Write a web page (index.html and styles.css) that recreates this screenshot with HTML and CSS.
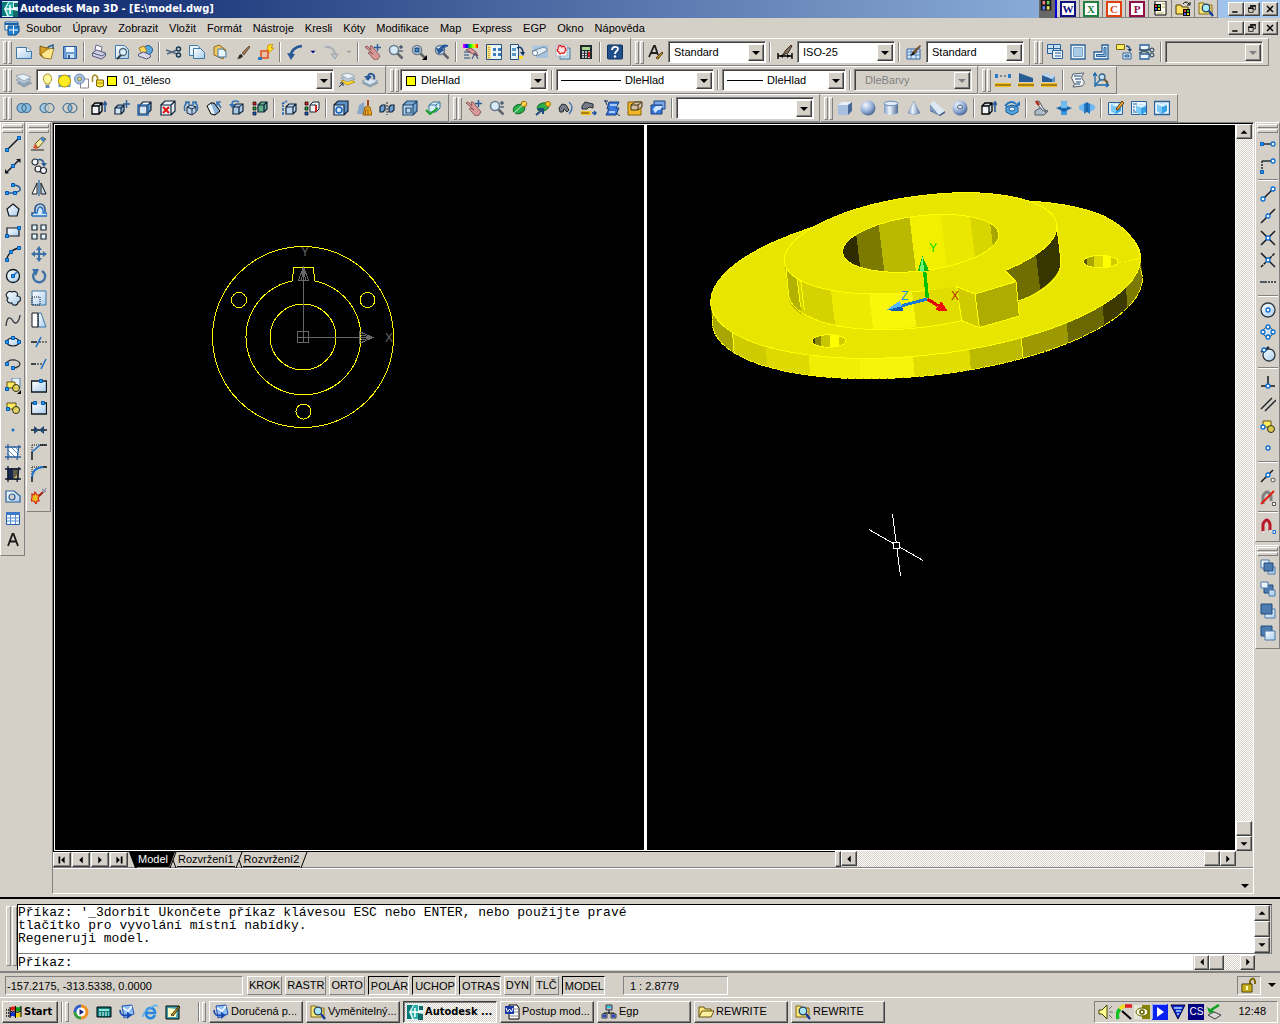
FILE: index.html
```html
<!DOCTYPE html>
<html lang="cs">
<head>
<meta charset="utf-8">
<title>Autodesk Map 3D - [E:\model.dwg]</title>
<link rel="stylesheet" href="styles.css">
</head>
<body>
<svg class="sprite" aria-hidden="true">
<defs>
<linearGradient id="gp" x1="0" y1="0" x2="1" y2="1"><stop offset="0" stop-color="#fff"/><stop offset="1" stop-color="#a9cdec"/></linearGradient>
<linearGradient id="gm" x1="0" y1="0" x2="1" y2="0"><stop offset="0" stop-color="#7c9cc4"/><stop offset=".4" stop-color="#eef5fd"/><stop offset="1" stop-color="#4c6c98"/></linearGradient>
<radialGradient id="gs" cx=".35" cy=".3" r=".8"><stop offset="0" stop-color="#f4f8ff"/><stop offset=".5" stop-color="#9cb4dc"/><stop offset="1" stop-color="#3a5688"/></radialGradient>
<linearGradient id="gr" x1="0" y1="0" x2="1" y2="0"><stop offset="0" stop-color="#f0f"/><stop offset=".25" stop-color="#00f"/><stop offset=".5" stop-color="#0f0"/><stop offset=".75" stop-color="#ff0"/><stop offset="1" stop-color="#f00"/></linearGradient>
<g id="cube"><path d="M2 6h8v8H2z" fill="#d4e6f4"/><path d="M2 6l4-4h8l-4 4z" fill="#fff"/><path d="M10 6l4-4v8l-4 4z" fill="#6b9cc8"/><path d="M2 6h8v8H2zM2 6l4-4h8v8l-4 4M10 6l4-4" fill="none" stroke="#10243c" stroke-width="1.2"/></g>
<g id="minicube"><path d="M1 8h6v6H1z" fill="#d4e6f4"/><path d="M1 8l3-3h6v6l-3 3V8z" fill="#8ab2d6"/><path d="M1 8h6v6H1zM1 8l3-3h6v6l-3 3M7 8l3-3" fill="none" stroke="#10243c" stroke-width="1.2"/></g>
<g id="icecube"><path d="M3 5l5-2 5 2v6l-5 3-5-3z" fill="#38a0e8"/><path d="M3 5l5-2 5 2-5 2z" fill="#d8f2ff"/><path d="M3 5l5 2v7l-5-3z" fill="#7cc8f4"/></g>
<g id="lens"><circle cx="6" cy="6" r="4.5" fill="#d8ecf8" stroke="#6c7c90" stroke-width="1.6"/><path d="M9.5 9.5l5 5" stroke="#606468" stroke-width="2.5"/></g>
<g id="nut"><path d="M-1.5-1.5h3v3h-3z" fill="#2a9cf0" stroke="#0058b0"/></g>
<g id="ring"><circle r="2" fill="#fff" stroke="#0a6cd0" stroke-width="1.3"/></g>
<g id="ruler"><path d="M0 11h16v4H0z" fill="#f0c020"/><path d="M1 12v2M3 12v2M5 12v2M7 12v2M9 12v2M11 12v2M13 12v2M15 12v2" stroke="#604000"/></g>
</defs>
<symbol id="i-app" viewBox="0 0 16 16"><path d="M0 0h16v16H0z" fill="#d8f4f0"/><path d="M0 1h6L2 8l3 7H0z" fill="#087878"/><path d="M7 1h4v14H7L4 8z" fill="#28b0a8"/><path d="M12 2h4v4h-4zM11 9l5 1v6h-5z" fill="#106868"/><path d="M8 4v9M3 8h11" stroke="#fff" stroke-width="1.5"/></symbol>
<symbol id="i-doc" viewBox="0 0 16 16"><path d="M1 2h13v8H1z" fill="#fff" stroke="#1860a8"/><path d="M1 4h13" stroke="#1860a8" stroke-width="2"/><path d="M4 6h11v6l-3 3H4z" fill="#2080d0" stroke="#0c4888"/><path d="M9.500 6v8M5 10h9" stroke="#fff"/></symbol>
<symbol id="i-new" viewBox="0 0 16 16"><path d="M.5 3.500h10l5 4v7H.5z" fill="url(#gp)" stroke="#3c78a8"/><path d="M10.500 3.500v4h5" fill="#fff" stroke="#3c78a8"/></symbol>
<symbol id="i-open" viewBox="0 0 16 16"><path d="M1 2l6 2 3-1-5 11-4-3z" fill="#d8a028" stroke="#805c10"/><path d="M5 14l-3-4 7-5 6-1-3 11z" fill="#ffe890" stroke="#a07c20"/><path d="M9 3l5-2v4" fill="none" stroke="#286090" stroke-width="1.5"/></symbol>
<symbol id="i-save" viewBox="0 0 16 16"><path d="M1.500 2.500h13v12h-13z" fill="#6c9cd8" stroke="#2a5c9c"/><path d="M4 3h8v5H4z" fill="#eef6ff"/><path d="M5 10h7v4H5z" fill="#cfe0f0"/><path d="M6 11h2v3H6z" fill="#2a5c9c"/></symbol>
<symbol id="i-print" viewBox="0 0 16 16"><path d="M5 1l6 2-1 5-6-2z" fill="#fff" stroke="#666c90"/><path d="M1.500 9l4-3 9 3v3l-4 3-9-3z" fill="#d0d0e0" stroke="#505880"/><path d="M2 9l9 3 4-3" fill="none" stroke="#505880"/></symbol>
<symbol id="i-preview" viewBox="0 0 16 16"><path d="M1.500 1.500h9l4 4v9h-13z" fill="url(#gp)" stroke="#3c78a8"/><circle cx="9" cy="8" r="3.5" fill="#d8f0fc" stroke="#506878" stroke-width="1.3"/><path d="M7 11l-4 4" stroke="#303840" stroke-width="2"/></symbol>
<symbol id="i-publish" viewBox="0 0 16 16"><circle cx="11" cy="6" r="4.5" fill="#58a8e0" stroke="#205890"/><path d="M2 4l5-2 3 5-5 3z" fill="#ffd860" stroke="#a07820"/><path d="M1.500 10l5-2 7 3v2l-4 2-8-3z" fill="#d8d8e8" stroke="#505880"/></symbol>
<symbol id="i-cut" viewBox="0 0 16 16"><path d="M0 6l11 4M1 10l10-4" stroke="#506880" stroke-width="1.6"/><circle cx="12.5" cy="5" r="2" fill="none" stroke="#183858" stroke-width="1.5"/><circle cx="12.5" cy="11" r="2" fill="none" stroke="#183858" stroke-width="1.5"/></symbol>
<symbol id="i-copy" viewBox="0 0 16 16"><path d="M.5 1.500h8l3 3v7H.5z" fill="#e8f2fa" stroke="#3c78a8"/><path d="M4.500 4.500h7l4 4v6h-11z" fill="url(#gp)" stroke="#3c78a8"/></symbol>
<symbol id="i-paste" viewBox="0 0 16 16"><path d="M2 3l5-2 7 5-3 9-9-4z" fill="#f0c860" stroke="#906818"/><path d="M6 5h5l3 3v5H6z" fill="#e8f4fc" stroke="#3c78a8"/></symbol>
<symbol id="i-brush" viewBox="0 0 16 16"><path d="M7 9l7-7 1 1-6 8z" fill="#a07850" stroke="#503820" stroke-width=".7"/><path d="M2 15c2-1 1-4 4-5l2 2c-1 2-3 3-6 3z" fill="#282828"/></symbol>
<symbol id="i-blockedit" viewBox="0 0 16 16"><path d="M10 1l5-1-2 4h3l-7 7 2-5H9z" fill="#ffe020" stroke="#c08000" stroke-width=".7"/><path d="M3 7h7v7H3z" fill="#e8c0a8" stroke="#e05018" stroke-width="1.5"/><path d="M0 13h4v3H0z" fill="#2a78c8"/></symbol>
<symbol id="i-undo" viewBox="0 0 16 16"><path d="M4 12C4 6 8 3 15 2" fill="none" stroke="#285898" stroke-width="2.6"/><path d="M0 9l8 1-4 6z" fill="#285898"/></symbol>
<symbol id="i-redo" viewBox="0 0 16 16"><path d="M2 3c6-1 10 3 10 8" fill="none" stroke="#a8b0b8" stroke-width="2"/><path d="M8 10h7l-3 5z" fill="#c4c8cc" stroke="#98a0a8"/></symbol>
<symbol id="i-pan" viewBox="0 0 16 16"><path d="M0 3l2-1 4 4-1-4 2 0 3 4 1 1 4 5-3 4c-5 0-5-4-9-7l2-1 3 2z" fill="#d89898" stroke="#804848" stroke-width=".8"/><path d="M12.500 0v7M9 3.500h7" stroke="#2a5c9c" stroke-width="1.5"/></symbol>
<symbol id="i-zoom" viewBox="0 0 16 16"><use href="#lens"/><path d="M11 3h4M13 1v4M11 7h4" stroke="#183858"/></symbol>
<symbol id="i-zoomwin" viewBox="0 0 16 16"><use href="#lens"/><path d="M4 4h4v4H4z" fill="#4888c8" stroke="#103868"/><path d="M16 11v5h-5z"/></symbol>
<symbol id="i-zoomprev" viewBox="0 0 16 16"><use href="#lens"/><path d="M14 2C9 0 6 3 5 7M3 5l2 4 4-3z" fill="#285898" stroke="#285898" stroke-width="1.5"/></symbol>
<symbol id="i-props" viewBox="0 0 16 16"><path d="M0 0h15v4H0z" fill="url(#gr)"/><path d="M3 6l5-2 5 4 2 4-3-1-4-2z" fill="#d89898" stroke="#905050"/><path d="M1 8h6M1 11h5M1 14h6" stroke="#204878"/><path d="M9 15l3-6 3 6" fill="none" stroke="#204878"/></symbol>
<symbol id="i-dc" viewBox="0 0 16 16"><path d="M.5 .5h15v15H.5z" fill="#eaf4fc" stroke="#28507c"/><path d="M1 1h4v14H1z" fill="#ffe888"/><path d="M3 3v11" stroke="#806020" stroke-dasharray="1 1"/><path d="M7 4h3v3H7zM12 4h3v3h-3zM7 9h3v3H7zM12 9h3v3h-3z" fill="#3c7cb8"/></symbol>
<symbol id="i-palette" viewBox="0 0 16 16"><path d="M1.500 .5h8v15h-8z" fill="#eaf4fc" stroke="#28507c"/><path d="M3 4h4v3H3zM3 9h4v3H3z" fill="#5c98c8"/><path d="M8 4c4-2 6 1 6 5" fill="none" stroke="#103868" stroke-width="1.5"/><path d="M11 8h5l-2 4z" fill="#103868"/><path d="M10 12h4v3h-4z" fill="#ffe020"/></symbol>
<symbol id="i-sheets" viewBox="0 0 16 16"><path d="M0 2l16-1v13H4z" fill="#a8c4dc"/><path d="M0 7l12-4 4 3-11 6z" fill="#e4ecf2" stroke="#6888a4"/><circle cx="3" cy="9" r="2.5" fill="#fff" stroke="#6888a4"/></symbol>
<symbol id="i-markup" viewBox="0 0 16 16"><path d="M5 4h10v11H5z" fill="#c0d8ec" stroke="#4878a4"/><path d="M1 1h11v11H1z" fill="#fff" stroke="#a8b8c8"/><path d="M3 3q2-3 4 0q3-2 3 1q2 2 0 3q0 3-3 2q-3 2-3-1q-3-1-1-3z" fill="#ffe0e0" stroke="#e01818" stroke-width="1.3"/></symbol>
<symbol id="i-calc" viewBox="0 0 16 16"><path d="M2 1h12v14H2z" fill="#202830"/><path d="M4 3h8v3H4z" fill="#a8d890"/><path d="M4 8h8M4 10.500h8M4 13h8" stroke="#f0f0f0" stroke-width="1.5" stroke-dasharray="2 1"/><path d="M10 8h2v5h-2z" fill="#d02020"/></symbol>
<symbol id="i-help" viewBox="0 0 16 16"><rect x=".5" y="1" width="15" height="14" rx="1" fill="#20508c" stroke="#103060"/><path d="M5 6c0-4 6-4 6-1 0 2-3 2-3 5" fill="none" stroke="#fff" stroke-width="1.8"/><circle cx="8" cy="12.5" r="1.2" fill="#fff"/></symbol>
<symbol id="i-textstyle" viewBox="0 0 16 16"><path d="M1 13L6 2h1l3 9M3 9h6" fill="none" stroke="#202020" stroke-width="1.8"/><path d="M8 14l6-6 1 1-5 6z" fill="#c09020" stroke="#604010"/></symbol>
<symbol id="i-dimstyle" viewBox="0 0 16 16"><path d="M1 9v6M15 9v6M1 12h14" stroke="#000" stroke-width="1.4"/><path d="M3 12l3-2v4zM13 12l-3-2v4z"/><path d="M8 7l6-6 1 1-4 7-5 2z" fill="#807060" stroke="#403020"/></symbol>
<symbol id="i-tablestyle" viewBox="0 0 16 16"><path d="M1 5h13v10H1z" fill="#d8e8f8" stroke="#3060a0"/><path d="M1 8h13M1 11h13M5 5v10M10 5v10" stroke="#5888c0"/><path d="M6 8l8-7 1 1-6 8z" fill="#705030"/><path d="M4 12l3-4 2 2z"/></symbol>
<symbol id="i-vports" viewBox="0 0 16 16"><path d="M.5 .5h13v9H.5zM.5 4.500h13M6.500 .5v9" fill="#c8e0f4" stroke="#28609c"/><path d="M5.500 6.500h10v8h-10z" fill="#eef6fc" stroke="#28609c"/><path d="M8 9h6M8 12h6" stroke="#28609c"/></symbol>
<symbol id="i-vp1" viewBox="0 0 16 16"><path d="M1 1h14v14H1z" fill="#eef6fc" stroke="#28609c" stroke-width="1.3"/><path d="M3.500 3.500h9v9h-9z" fill="#a8cce8" stroke="#7ca8cc"/></symbol>
<symbol id="i-vp2" viewBox="0 0 16 16"><path d="M9 1h6v14H1V8h8z" fill="#eef6fc" stroke="#28609c" stroke-width="1.3"/><path d="M11 3.500h2v9H3.500v-2H11z" fill="#90bce0" stroke="#28609c"/></symbol>
<symbol id="i-vp3" viewBox="0 0 16 16"><path d="M.5 .5h8v5h-8z" fill="#ffec60" stroke="#786818"/><path d="M10 2c3 0 4 1 4 4" fill="none" stroke="#204878" stroke-width="1.4"/><path d="M11 5h5l-2 3z" fill="#204878"/><path d="M7 9h8v6H7z" fill="#eef6fc" stroke="#28609c"/><path d="M9 11h4v2H9z" fill="#90bce0" stroke="#28609c"/></symbol>
<symbol id="i-vp4" viewBox="0 0 16 16"><path d="M1 1h9v5H1zM1 10h9v5H1z" fill="#eef6fc" stroke="#28609c" stroke-width="1.3"/><path d="M0 5l10 4M0 9l10-4" stroke="#405868" stroke-width="1.5"/><circle cx="13" cy="6" r="2" fill="none" stroke="#183858"/><circle cx="13" cy="11" r="2" fill="none" stroke="#183858"/></symbol>
<symbol id="i-layers" viewBox="0 0 16 16"><path d="M1 11l7-3 8 3-8 4z" fill="#90a4b8" stroke="#8094a8" stroke-width=".7"/><path d="M0 8l7-3 8 3-7 4z" fill="#b8c6d4" stroke="#8094a8" stroke-width=".7"/><path d="M0 4l7-2 8 3-7 4z" fill="#e8f0f8" stroke="#8094a8" stroke-width=".7"/></symbol>
<symbol id="i-layercur" viewBox="0 0 16 16"><path d="M2 9l8-2 6 3-8 3z" fill="#ffd820" stroke="#a88008" stroke-width=".7"/><path d="M2 6l7-2 7 3-8 3z" fill="#c0ccd8" stroke="#8094a8" stroke-width=".7"/><path d="M2 3l7-2 7 3-7 3z" fill="#e8f0f8" stroke="#8094a8" stroke-width=".7"/><path d="M0 15l4-4M1 11h3v3" fill="none" stroke="#203850"/></symbol>
<symbol id="i-layerprev" viewBox="0 0 16 16"><path d="M0 11l8-3 8 3-8 4z" fill="#90a4b8" stroke="#8094a8" stroke-width=".7"/><path d="M0 9l8-3 8 3-8 4z" fill="#dce6f0" stroke="#8094a8" stroke-width=".7"/><path d="M12 7C14 1 6 0 6 5" fill="none" stroke="#285898" stroke-width="2"/><path d="M2 4h8L6 9z" fill="#285898"/></symbol>
<symbol id="i-bulb" viewBox="0 0 16 16"><path d="M6 10C2 7 4 1 8 1s6 6 2 9v1H6z" fill="#fff8a0" stroke="#a89020"/><path d="M6 12h4v3H6z" fill="#6c8cb8"/></symbol>
<symbol id="i-sun" viewBox="0 0 16 16"><path d="M2 2h12v12H2z" fill="#60a0d8"/><circle cx="8" cy="8" r="6" fill="#ffec20" stroke="#b89000"/></symbol>
<symbol id="i-vpfreeze" viewBox="0 0 16 16"><path d="M7 6h8v9H7z" fill="#fff" stroke="#888"/><circle cx="6" cy="6" r="5" fill="#a8c4e4" stroke="#6888b4"/><circle cx="6" cy="6" r="2" fill="#d8d080" stroke="#887"/></symbol>
<symbol id="i-lock" viewBox="0 0 16 16"><path d="M2 9V4q2-4 5 0v3" fill="none" stroke="#a08c20" stroke-width="1.6"/><path d="M6 7h7v6q-3 2-7 0z" fill="#ffe838" stroke="#806808"/><path d="M6 10h7" stroke="#a08c20"/></symbol>
<symbol id="i-dist" viewBox="0 0 16 16"><path d="M1 4h14" stroke="#103868" stroke-dasharray="2 2"/><path d="M0 2h3v4H0zM13 2h3v4h-3z" fill="#2a78c8"/><use href="#ruler"/></symbol>
<symbol id="i-area" viewBox="0 0 16 16"><path d="M1 1l14 5v4H1z" fill="#285c94"/><use href="#ruler"/></symbol>
<symbol id="i-mass" viewBox="0 0 16 16"><path d="M1 3l10 4v3H1z" fill="#285c94"/><path d="M1 3l4-2 9 3-3 3z" fill="#b8d4ec"/><path d="M11 7l3-3v6h-3z" fill="#5c90c0"/><use href="#ruler"/></symbol>
<symbol id="i-list" viewBox="0 0 16 16"><path d="M3 2l11-1q-4 4-1 7t-1 6l-9 1q3-3 0-6t0-7z" fill="#f4f4f4" stroke="#506070"/><path d="M4 4h7M5 7h6M6 10h5M5 12h5" stroke="#184878"/></symbol>
<symbol id="i-idpoint" viewBox="0 0 16 16"><path d="M2 15V2M2 13h13M0 4l2-3 2 3M13 11l3 2-3 2M2 13l6-6" fill="none" stroke="#1868b0" stroke-width="1.3"/><circle cx="9" cy="5" r="3" fill="#c0e0f8" stroke="#386080" stroke-width="1.3"/><path d="M11 7l4 4" stroke="#705838" stroke-width="2"/></symbol>
<symbol id="i-union" viewBox="0 0 16 16"><circle cx="5.5" cy="8" r="4.5" fill="#8cbcdc"/><circle cx="10.5" cy="8" r="4.5" fill="#8cbcdc"/><circle cx="5.5" cy="8" r="4.5" fill="none" stroke="#28608c"/><circle cx="10.5" cy="8" r="4.5" fill="none" stroke="#28608c"/></symbol>
<symbol id="i-subtract" viewBox="0 0 16 16"><circle cx="5.5" cy="8" r="4.5" fill="#a4c8e0" stroke="#28608c"/><circle cx="10.5" cy="8" r="4.5" fill="#d4d0c8" fill-opacity=".7" stroke="#28608c"/></symbol>
<symbol id="i-intersect" viewBox="0 0 16 16"><path d="M8 4.500q4 3.500 0 7q-4-3.500 0-7z" fill="#8cbcdc"/><circle cx="5.5" cy="8" r="4.5" fill="none" stroke="#28608c"/><circle cx="10.5" cy="8" r="4.5" fill="none" stroke="#28608c"/></symbol>
<symbol id="i-extrude" viewBox="0 0 16 16"><path d="M1 6h7v8H1z" fill="#f0f4f8"/><path d="M1 6l3-3h7L8 6zM8 6l3-3v8l-3 3z" fill="#c8dcec"/><path d="M1 6h7v8H1zM1 6l3-3h7v8l-3 3M8 6l3-3" fill="none" stroke="#000" stroke-width="1.3"/><path d="M14 12V3M12 5l2-3 2 3" fill="none" stroke="#285c98" stroke-width="1.6"/></symbol>
<symbol id="i-moveface" viewBox="0 0 16 16"><use href="#minicube"/><path d="M12.500 0v8M9 4h7" stroke="#285c98" stroke-width="1.4"/></symbol>
<symbol id="i-offsetface" viewBox="0 0 16 16"><use href="#cube"/><path d="M1 5h10v10H1z" fill="none" stroke="#2a6cb0" stroke-width="1.5"/></symbol>
<symbol id="i-delface" viewBox="0 0 16 16"><path d="M1 5h10v10H1zM1 5l4-4h10v10l-4 4M11 5l4-4" fill="#e8eef4" stroke="#10243c" stroke-width="1.2"/><path d="M3 7l6 6M9 7l-6 6" stroke="#e01010" stroke-width="2"/></symbol>
<symbol id="i-rotface" viewBox="0 0 16 16"><path d="M4 7l4-2 5 2v5l-4 3-5-2z" fill="#b8d4ec" stroke="#10243c"/><path d="M4 7l5 2 4-2M9 9v5" fill="none" stroke="#10243c"/><path d="M2 11Q0 5 5 2M14 11q2-6-3-9M2 2h4v4M14 2h-4v4" fill="none" stroke="#3474b4" stroke-width="1.5"/></symbol>
<symbol id="i-taper" viewBox="0 0 16 16"><path d="M1 6l4-3 5 8-1 4-4-1z" fill="#e8f2fa" stroke="#000"/><path d="M5 3h3l6 8-5 4" fill="#8cb4d8" stroke="#000"/><path d="M15 8l-3-5M11 6V2h4" fill="none" stroke="#3474b4" stroke-width="1.5"/></symbol>
<symbol id="i-copyface" viewBox="0 0 16 16"><path d="M4 7h6v7H4zM4 7l3-3h7v7l-4 3" fill="#a8c8e4" stroke="#10243c" stroke-width="1.2"/><path d="M10 7l4-3" stroke="#10243c"/><path d="M10 2C6 0 3 1 3 4" fill="none" stroke="#3474b4" stroke-width="1.6"/><path d="M0 4h6L3 8z" fill="#3474b4"/></symbol>
<symbol id="i-colorface" viewBox="0 0 16 16"><path d="M6 5h6v7H6zM6 5l3-3h6v7l-3 3M12 5l3-3" fill="#60b088" stroke="#10243c" stroke-width="1.2"/><path d="M1 2h3v3H1z" fill="#e02020" stroke="#000" stroke-width=".7"/><path d="M1 7h3v3H1z" fill="#20b040" stroke="#000" stroke-width=".7"/><path d="M1 12h3v3H1z" fill="#2060e0" stroke="#000" stroke-width=".7"/></symbol>
<symbol id="i-copyedge" viewBox="0 0 16 16"><path d="M5 7h7v7H5zM5 7l3-3h7v7l-3 3M12 7l3-3" fill="#c0d8ec" stroke="#10243c" stroke-width="1.2"/><path d="M2 15V5M1 4l5-3" stroke="#2a6cb0" stroke-width="1.6" stroke-dasharray="3 1"/></symbol>
<symbol id="i-coloredge" viewBox="0 0 16 16"><path d="M6 5h6v7H6zM6 5l3-3h6v7l-3 3" fill="#f0f0f0" stroke="#10243c"/><path d="M12 5v7" stroke="#e01010" stroke-width="1.6"/><path d="M1 2h3v3H1z" fill="#e02020" stroke="#000" stroke-width=".7"/><path d="M1 7h3v3H1z" fill="#20b040" stroke="#000" stroke-width=".7"/><path d="M1 12h3v3H1z" fill="#2060e0" stroke="#000" stroke-width=".7"/></symbol>
<symbol id="i-imprint" viewBox="0 0 16 16"><path d="M1 5h10v10H1z" fill="#d4e6f4"/><path d="M1 5l4-4h10v10l-4 4V5z" fill="#5c90c4"/><path d="M1 5h10v10H1zM1 5l4-4h10v10l-4 4" fill="none" stroke="#10243c" stroke-width="1.2"/><circle cx="6" cy="10" r="3" fill="none" stroke="#1864c0" stroke-width="1.5"/></symbol>
<symbol id="i-clean" viewBox="0 0 16 16"><path d="M1 14l2-9 5-3 1 12z" fill="#88a8c8"/><path d="M12 0v6" stroke="#a04818" stroke-width="2"/><path d="M9 7h5l2 8H7z" fill="#f0b020" stroke="#905808"/><path d="M10 9l-1 6M12 9v6" stroke="#905808"/></symbol>
<symbol id="i-separate" viewBox="0 0 16 16"><path d="M1 7l2-2h3v5l-2 2H1zM10 7l2-2h3v5l-2 2h-3z" fill="#6ca0d0" stroke="#10243c" stroke-width="1.2"/><path d="M8 2v13" stroke="#10243c" stroke-dasharray="2 1"/></symbol>
<symbol id="i-shell" viewBox="0 0 16 16"><path d="M1 5h10v10H1z" fill="#b8d4ec"/><path d="M1 5l4-4h10v10l-4 4V5z" fill="#78a8d4"/><path d="M1 5h10v10H1zM1 5l4-4h10v10l-4 4M11 5l4-4M4 8h5v5H4z" fill="none" stroke="#204870" stroke-width="1.2"/></symbol>
<symbol id="i-check" viewBox="0 0 16 16"><path d="M4 5l4-3h7v6l-4 4H4z" fill="#d8eef8" stroke="#387898"/><path d="M4 5h7v7M11 5l4-3" fill="none" stroke="#387898"/><path d="M1 10l4 4 8-6" fill="none" stroke="#10a020" stroke-width="2"/></symbol>
<symbol id="i-orbit" viewBox="0 0 16 16"><ellipse cx="7" cy="9" rx="6" ry="4.5" fill="#28b048" stroke="#186828" transform="rotate(-20 7 9)"/><circle cx="12" cy="4" r="2.8" fill="#ffc828" stroke="#a07000"/><path d="M1 14L14 2" stroke="#fff" stroke-width=".8"/></symbol>
<symbol id="i-corbit" viewBox="0 0 16 16"><ellipse cx="8" cy="7" rx="6" ry="4" fill="#28b048" stroke="#186828" transform="rotate(-20 8 7)"/><circle cx="13" cy="4" r="2.5" fill="#ffc828" stroke="#a07000"/><path d="M1 15l6-5M3 9h5v5" fill="none" stroke="#204880" stroke-width="2"/></symbol>
<symbol id="i-swivel" viewBox="0 0 16 16"><path d="M1 8l3-4 4 1 3 5-2 2-3-3-1 3H2z" fill="#787c88" stroke="#202830"/><path d="M11 2q6 5 0 12" fill="none" stroke="#4878b0" stroke-width="1.6"/></symbol>
<symbol id="i-caldist" viewBox="0 0 16 16"><path d="M1 6l3-4 4 1 4 1v4l-4-1-2 2H1z" fill="#787c88" stroke="#202830"/><path d="M0 11h10v4H0z" fill="#f0c020"/><path d="M1 12v2M3 12v2M5 12v2M7 12v2" stroke="#604000"/><path d="M11 13h4M13 11l2 2-2 2" fill="none" stroke="#1850a0" stroke-width="1.4"/></symbol>
<symbol id="i-clip1" viewBox="0 0 16 16"><path d="M5 2h10l-3 6h3l-3 7H2l3-6H3z" fill="#3878d8" stroke="#183c80"/><path d="M6 5h7M5 12h6" stroke="#d0e4ff" stroke-width="1.5"/><path d="M0 1h4M1 0l2 5M12 13l4 3" stroke="#103060"/></symbol>
<symbol id="i-clip2" viewBox="0 0 16 16"><path d="M1 2h13v13H1z" fill="#f0b828" stroke="#886008"/><path d="M4 5l4-3h7v5l-4 3H4z" fill="#d0c0a0" stroke="#403010"/><path d="M4 5h7v5M11 5l4-3" fill="none" stroke="#403010"/></symbol>
<symbol id="i-clip3" viewBox="0 0 16 16"><path d="M4 1h11v8H4z" fill="#78a8e8" stroke="#183c80"/><path d="M1 5h11v9H1z" fill="#3878d8" stroke="#183c80"/><path d="M3 9l3-3h7l-3 4H8l-3 3z" fill="#d0e4ff"/></symbol>
<symbol id="i-box" viewBox="0 0 16 16"><path d="M1 5l4-3h10l-4 3z" fill="#e8f0fa"/><path d="M1 5h10v10H1z" fill="#a8c0e0"/><path d="M11 5l4-3v9l-4 4z" fill="#486898"/></symbol>
<symbol id="i-sphere" viewBox="0 0 16 16"><circle cx="8" cy="8" r="7.5" fill="url(#gs)"/></symbol>
<symbol id="i-cyl" viewBox="0 0 16 16"><path d="M1 3v10q7 4 14 0V3z" fill="url(#gm)"/><ellipse cx="8" cy="3.5" rx="7" ry="2.2" fill="#e4eefa" stroke="#6c8cb4"/></symbol>
<symbol id="i-cone" viewBox="0 0 16 16"><path d="M8 1L2 13q6 3 12 0z" fill="url(#gm)" stroke="#6c8cb4" stroke-width=".5"/></symbol>
<symbol id="i-wedge" viewBox="0 0 16 16"><path d="M1 4l0 6 9 5z" fill="#7c98c0"/><path d="M1 4l4-3 11 10-6 4z" fill="#dce8f4"/><path d="M10 15l6-4v2l-5 3-10-5v-1z" fill="#3c5c8c"/></symbol>
<symbol id="i-torus" viewBox="0 0 16 16"><circle cx="8" cy="8" r="7.5" fill="url(#gs)"/><ellipse cx="8" cy="7" rx="2.5" ry="2" fill="#e8e8e8" stroke="#3c5c8c"/></symbol>
<symbol id="i-revolve" viewBox="0 0 16 16"><path d="M2 7l6-2 6 2v5l-6 3-6-3z" fill="#50a8e8" stroke="#185890"/><ellipse cx="8" cy="9" rx="3" ry="2" fill="#e0f0fc" stroke="#185890"/><path d="M1 6q6-7 11-2" fill="none" stroke="#2878c0" stroke-width="2"/><path d="M10 6h6V1z" fill="#2878c0"/></symbol>
<symbol id="i-slice" viewBox="0 0 16 16"><path d="M2 11l5-3 8 3-4 4H2z" fill="#b0bcc8" stroke="#505c68"/><path d="M3 2l3-1 4 7 4 5-6-4z" fill="#d8e0e8" stroke="#505c68"/><path d="M3 1l3 4" stroke="#b02818" stroke-width="2.5"/></symbol>
<symbol id="i-section" viewBox="0 0 16 16"><path d="M5 1h6v14H5z" fill="#3c98e0"/><path d="M0 8l8-3 8 3-8 4z" fill="#1868b0"/><path d="M5 2q3-2 6 0v6H5z" fill="#70bcf0"/></symbol>
<symbol id="i-interfere" viewBox="0 0 16 16"><path d="M0 6l5-3v9l-5-3zM16 6l-5-3v9l5-3z" fill="#70b8f0"/><path d="M5 4l3-2 3 2v10l-3-2-3 2z" fill="#2478c8"/><path d="M8 3v9" stroke="#104880"/></symbol>
<symbol id="i-setdraw" viewBox="0 0 16 16"><path d="M.5 2.500h14v12H.5z" fill="#d8ecf8" stroke="#28609c"/><use href="#icecube"/><path d="M8 9l6-8 2 2-6 7z" fill="#f0a030" stroke="#604010"/></symbol>
<symbol id="i-setview" viewBox="0 0 16 16"><path d="M.5 1.500h15v13H.5z" fill="#eaf4fc" stroke="#28609c"/><path d="M2 4h4M2 7h2M2 10h2M2 12h4" stroke="#28609c"/><g transform="translate(2 1)"><use href="#icecube"/></g></symbol>
<symbol id="i-setprof" viewBox="0 0 16 16"><path d="M.5 1.500h15v13H.5z" fill="#eaf4fc" stroke="#28609c" stroke-width="1.3"/><use href="#icecube"/></symbol>
<symbol id="i-line" viewBox="0 0 16 16"><path d="M2 14L14 2" stroke="#101820" stroke-width="1.5"/><use href="#nut" x="2" y="14"/><use href="#nut" x="14" y="2"/></symbol>
<symbol id="i-xline" viewBox="0 0 16 16"><path d="M1 15L15 1" stroke="#101820" stroke-width="1.5"/><path d="M11 1h4.500v4zM0 11v4.500h4z" fill="#101820"/><use href="#nut" x="8" y="8"/></symbol>
<symbol id="i-pline" viewBox="0 0 16 16"><path d="M2 13h7M10 12q6 0 5-4-2-3-7-3" fill="none" stroke="#285c98" stroke-width="1.5"/><use href="#nut" x="2" y="13"/><use href="#nut" x="10" y="13"/><use href="#nut" x="8" y="5"/></symbol>
<symbol id="i-polygon" viewBox="0 0 16 16"><path d="M8 2l6 5-2 7H4L2 7z" fill="url(#gp)" stroke="#101820" stroke-width="1.2"/></symbol>
<symbol id="i-rect" viewBox="0 0 16 16"><path d="M2 4h12v8H2z" fill="url(#gp)" stroke="#101820" stroke-width="1.2"/><use href="#nut" x="2" y="12"/><use href="#nut" x="14" y="4"/></symbol>
<symbol id="i-arc" viewBox="0 0 16 16"><path d="M1 15Q4 3 15 2" fill="none" stroke="#101820" stroke-width="1.3"/><use href="#nut" x="2" y="14"/><use href="#nut" x="6" y="6"/><use href="#nut" x="14" y="2"/></symbol>
<symbol id="i-circle" viewBox="0 0 16 16"><circle cx="8" cy="8" r="6.5" fill="url(#gp)" stroke="#101820" stroke-width="1.3"/><path d="M8 8l4-4" stroke="#1868c0" stroke-width="1.5"/><use href="#nut" x="8" y="8"/></symbol>
<symbol id="i-cloud" viewBox="0 0 16 16"><path d="M3 8C-1 5 3 0 7 2c3-2 7 1 5 4 5 0 4 6 1 6 0 4-6 4-6 1-4 1-6-3-4-5z" fill="url(#gp)" stroke="#202830" stroke-width="1.2"/></symbol>
<symbol id="i-spline" viewBox="0 0 16 16"><path d="M1 14C2 3 6 5 8 9s6 2 7-6" fill="none" stroke="#303840" stroke-width="1.3"/></symbol>
<symbol id="i-ellipse" viewBox="0 0 16 16"><ellipse cx="8" cy="8" rx="6.5" ry="4" fill="url(#gp)" stroke="#101820" stroke-width="1.2"/><use href="#nut" x="2" y="8"/><use href="#nut" x="14" y="8"/><use href="#nut" x="8" y="4"/></symbol>
<symbol id="i-elarc" viewBox="0 0 16 16"><path d="M1 8q2-5 9-4 7 2 4 6-2 2-6 2" fill="none" stroke="#303840" stroke-width="1.3"/><use href="#nut" x="2" y="8"/><use href="#nut" x="8" y="12"/></symbol>
<symbol id="i-insert" viewBox="0 0 16 16"><path d="M7 0h8v10H7z" fill="#e4f0fa" stroke="#5080a8"/><path d="M2 4h8v6H2z" fill="#ffec60" stroke="#605010"/><circle cx="11" cy="10" r="3.5" fill="#e8d850" fill-opacity=".8" stroke="#303010"/><use href="#nut" x="2" y="11"/><path d="M16 12v4h-4z"/></symbol>
<symbol id="i-block" viewBox="0 0 16 16"><path d="M2 3h9v6H2z" fill="#ffec60" stroke="#605010"/><circle cx="11" cy="10" r="3.5" fill="#e8d850" fill-opacity=".8" stroke="#303010"/><use href="#nut" x="3" y="9"/></symbol>
<symbol id="i-point" viewBox="0 0 16 16"><path d="M7 7h2v2H7z" fill="#2a8cf0" stroke="#0058b0" stroke-width=".6"/></symbol>
<symbol id="i-hatch" viewBox="0 0 16 16"><path d="M2 2h12v12H2z" fill="#fff"/><path d="M2 5l9 9M2 9l5 5M5 2l9 9M9 2l5 5" stroke="#5c94c8"/><path d="M0 3h16M0 13h16M3 0v16M14 1l-2 15" stroke="#285c98" stroke-width="1.3"/></symbol>
<symbol id="i-gradient" viewBox="0 0 16 16"><path d="M2 2h12v12H2z" fill="#605c48"/><path d="M3 3h5v10H3z" fill="#182850"/><path d="M8 13l5-5v5z" fill="#d8c060"/><path d="M0 3h16M0 13h16M3 0v16M14 1l-2 15" stroke="#101c38" stroke-width="1.3"/></symbol>
<symbol id="i-region" viewBox="0 0 16 16"><path d="M1 3h8l6 5v6H1z" fill="url(#gp)" stroke="#285c98" stroke-width="1.2"/><circle cx="7" cy="9" r="3" fill="#d4d0c8" stroke="#285c98" stroke-width="1.2"/></symbol>
<symbol id="i-table" viewBox="0 0 16 16"><path d="M1.500 2.500h13v12h-13z" fill="#f4f8ff" stroke="#285cb0"/><path d="M1 2h14v3H1z" fill="#3c78c8"/><path d="M2 8h12M2 11h12M5.500 5v9M10.500 5v9" stroke="#5c90d0"/></symbol>
<symbol id="i-mtext" viewBox="0 0 16 16"><path d="M3 14L7.500 2h1L13 14M5 9.500h6" fill="none" stroke="#181818" stroke-width="1.8"/></symbol>
<symbol id="i-erase" viewBox="0 0 16 16"><path d="M0 14h13" stroke="#202020"/><path d="M4 8l7-7 4 2-8 9z" fill="#f4e8a0" stroke="#605010"/><path d="M4 8l3 4-2 1-3-1z" fill="#e05030"/><path d="M11 1l4 2-3 3-3-3z" fill="#4888d0"/></symbol>
<symbol id="i-copyobj" viewBox="0 0 16 16"><circle cx="4" cy="4" r="3" fill="#f4f8fc" stroke="#202830" stroke-width="1.2"/><circle cx="7" cy="11" r="3" fill="#f4f8fc" stroke="#202830" stroke-width="1.2"/><circle cx="12.5" cy="12.5" r="3" fill="#f4f8fc" stroke="#202830" stroke-width="1.2"/><path d="M6 2q6-2 7 4" fill="none" stroke="#285c98" stroke-width="1.5"/><path d="M10 5h6l-3 4z" fill="#285c98"/></symbol>
<symbol id="i-mirror" viewBox="0 0 16 16"><path d="M8 0v16" stroke="#2a6cb0" stroke-width="1.3"/><path d="M6 3v11H1z" fill="#fff" stroke="#101820"/><path d="M10 3v11h5z" fill="#c8d8e8" stroke="#101820"/></symbol>
<symbol id="i-offset" viewBox="0 0 16 16"><path d="M1 14v-3h3q-1-9 5-9 5 0 5 6v2" fill="none" stroke="#285c98" stroke-width="1.6"/><path d="M1 14h15v-3h-4V8q-1-3-3-3T6 11H4" fill="#d4e8f8" stroke="#1c70c8" stroke-width="1.3"/></symbol>
<symbol id="i-array" viewBox="0 0 16 16"><path d="M1 1h5v5H1zM10 1h5v5h-5zM1 10h5v5H1zM10 10h5v5h-5z" fill="#e8f2fa" stroke="#182838" stroke-width="1.2"/></symbol>
<symbol id="i-move" viewBox="0 0 16 16"><path d="M8 0l3 4H9v3h3V5l4 3-4 3V9H9v3h2l-3 4-3-4h2V9H4v2L0 8l4-3v2h3V4H5z" fill="#3c70a8"/></symbol>
<symbol id="i-rotate" viewBox="0 0 16 16"><path d="M4 4a6 6 0 1 0 7-1" fill="none" stroke="#3c70a8" stroke-width="2.4"/><path d="M1 1l7 0-3 7z" fill="#3c70a8"/></symbol>
<symbol id="i-scale" viewBox="0 0 16 16"><path d="M1 1h14v14H1z" fill="url(#gp)" stroke="#3c78a8"/><path d="M1 7h8v8H1z" fill="none" stroke="#101820" stroke-dasharray="1 1"/></symbol>
<symbol id="i-stretch" viewBox="0 0 16 16"><path d="M7 1h3l5 14H7z" fill="url(#gp)" stroke="#3c78a8"/><path d="M1 1h6v14H1z" fill="#fff" stroke="#101820"/><path d="M7 2v13" stroke="#101820" stroke-dasharray="1 1"/></symbol>
<symbol id="i-trim" viewBox="0 0 16 16"><path d="M0 8h6" stroke="#101820" stroke-width="1.5"/><path d="M8 8h8" stroke="#101820" stroke-dasharray="2 1"/><path d="M5 13l5-10" stroke="#1c70c8" stroke-width="1.5"/></symbol>
<symbol id="i-extend" viewBox="0 0 16 16"><path d="M0 8h5" stroke="#101820" stroke-width="1.5"/><path d="M6 8h5" stroke="#101820" stroke-dasharray="2 1"/><path d="M10 13l5-10" stroke="#1c70c8" stroke-width="1.5"/></symbol>
<symbol id="i-breakpt" viewBox="0 0 16 16"><path d="M.5 3h15v11H.5z" fill="url(#gp)" stroke="#101820" stroke-width="1.3"/><use href="#nut" x="10" y="3"/></symbol>
<symbol id="i-break" viewBox="0 0 16 16"><path d="M.5 3h15v11H.5z" fill="url(#gp)" stroke="#101820" stroke-width="1.3"/><path d="M5 3h6" stroke="#d4d0c8" stroke-width="2"/><use href="#nut" x="4" y="3"/><use href="#nut" x="12" y="3"/></symbol>
<symbol id="i-join" viewBox="0 0 16 16"><path d="M0 8h16" stroke="#101820" stroke-width="1.5"/><path d="M3 4l5 4-5 4zM13 4L8 8l5 4z" fill="#204870"/></symbol>
<symbol id="i-chamfer" viewBox="0 0 16 16"><path d="M1 1h14M1 1v8" stroke="#101820" stroke-dasharray="1 1"/><path d="M1 8l8-7" stroke="#1c70c8" stroke-width="1.5"/><path d="M1 8v8M9 1h7" stroke="#101820" stroke-width="1.5"/></symbol>
<symbol id="i-fillet" viewBox="0 0 16 16"><path d="M1 1h14M1 1v8" stroke="#101820" stroke-dasharray="1 1"/><path d="M1 12Q1 2 12 1" fill="none" stroke="#1c70c8" stroke-width="1.8"/><path d="M1 11v5M12 1h4" stroke="#101820" stroke-width="1.5"/></symbol>
<symbol id="i-explode" viewBox="0 0 16 16"><path d="M1 6l2 1 1-3 2 3 3 0-2 3 1 3-2 0-1 3-2-3-3 0 1-3z" fill="#f0c020" stroke="#d02010" stroke-width="1.2"/><path d="M8 8l4-4" stroke="#a02010" stroke-width="2"/><path d="M11 1l4 3M15 0l-3 5" stroke="#6878a0"/></symbol>
<symbol id="i-tt" viewBox="0 0 16 16"><path d="M2 8h12" stroke="#505860" stroke-width="2"/><use href="#nut" x="2" y="8"/><use href="#ring" x="13" y="8"/></symbol>
<symbol id="i-from" viewBox="0 0 16 16"><path d="M2 3h10" stroke="#505860" stroke-width="2"/><path d="M2 3v10" stroke="#202830" stroke-width="1.5" stroke-dasharray="2 1"/><use href="#nut" x="2" y="14"/><use href="#ring" x="13" y="3"/></symbol>
<symbol id="i-endp" viewBox="0 0 16 16"><path d="M3 13L13 3" stroke="#101820" stroke-width="1.5"/><use href="#ring" x="3" y="13"/><use href="#ring" x="13" y="3"/></symbol>
<symbol id="i-midp" viewBox="0 0 16 16"><path d="M1 15L15 1" stroke="#101820" stroke-width="1.5"/><use href="#ring" x="8" y="8"/></symbol>
<symbol id="i-int" viewBox="0 0 16 16"><path d="M1 15L15 1M1 1l14 14" stroke="#101820" stroke-width="1.5"/><use href="#ring" x="8" y="8"/></symbol>
<symbol id="i-appint" viewBox="0 0 16 16"><path d="M1 1l14 14" stroke="#101820" stroke-width="1.5"/><path d="M1 15L15 1" stroke="#101820" stroke-width="1.5" stroke-dasharray="3 1"/><use href="#ring" x="8" y="8"/></symbol>
<symbol id="i-ext" viewBox="0 0 16 16"><path d="M0 8h7" stroke="#505860" stroke-width="2"/><path d="M8 8h8" stroke="#202830" stroke-width="1.5" stroke-dasharray="2 1"/></symbol>
<symbol id="i-cen" viewBox="0 0 16 16"><circle cx="8" cy="8" r="7" fill="url(#gp)" stroke="#303840" stroke-width="1.3"/><use href="#ring" x="8" y="8"/></symbol>
<symbol id="i-qua" viewBox="0 0 16 16"><circle cx="8" cy="8" r="5" fill="url(#gp)" stroke="#303840"/><use href="#ring" x="8" y="3"/><use href="#ring" x="8" y="13"/><use href="#ring" x="3" y="8"/><use href="#ring" x="13" y="8"/></symbol>
<symbol id="i-tan" viewBox="0 0 16 16"><circle cx="9" cy="9" r="6" fill="url(#gp)" stroke="#303840" stroke-width="1.3"/><path d="M1 6l8-5" stroke="#101820" stroke-width="1.5"/><use href="#ring" x="4" y="4"/></symbol>
<symbol id="i-per" viewBox="0 0 16 16"><path d="M1 12h14M8 2v10" stroke="#101820" stroke-width="1.5"/><use href="#ring" x="8" y="12"/></symbol>
<symbol id="i-par" viewBox="0 0 16 16"><path d="M1 13L12 2M5 15L16 4" stroke="#202830" stroke-width="1.5"/></symbol>
<symbol id="i-ins" viewBox="0 0 16 16"><path d="M3 3h8v6H3z" fill="#ffec60" stroke="#605010"/><circle cx="11" cy="11" r="3.5" fill="#d8c850" stroke="#303010"/><use href="#ring" x="3" y="9"/></symbol>
<symbol id="i-nod" viewBox="0 0 16 16"><use href="#ring" x="8" y="8"/></symbol>
<symbol id="i-nea" viewBox="0 0 16 16"><path d="M1 14L13 2" stroke="#101820" stroke-width="1.5"/><use href="#ring" x="8" y="7"/><circle cx="13" cy="12" r="2" fill="#eee" stroke="#555"/></symbol>
<symbol id="i-non" viewBox="0 0 16 16"><path d="M3 14V6q4-8 8 0v5" fill="none" stroke="#808080" stroke-width="3"/><path d="M1 14L14 1" stroke="#e02010" stroke-width="2"/><path d="M12.500 12.500h3v3h-3z" fill="#fff" stroke="#555"/></symbol>
<symbol id="i-magnet" viewBox="0 0 16 16"><path d="M3 14V6q4-8 7 0v7" fill="none" stroke="#b81828" stroke-width="3"/><path d="M2 13h3v2H2zM9 12h3v2H9z" fill="#ddd"/><path d="M13 12.500h2.500v3H13z" fill="#fff" stroke="#0a6cd0"/></symbol>
<symbol id="i-front" viewBox="0 0 16 16"><path d="M1 1h8v8H1zM8 8h7v7H8z" fill="url(#gp)" stroke="#4c78a8"/><path d="M4 4h9v8H4z" fill="#4c7cb0" stroke="#204c80"/></symbol>
<symbol id="i-back" viewBox="0 0 16 16"><path d="M4 4h9v8H4z" fill="#4c7cb0" stroke="#204c80"/><path d="M1 1h7v6H1zM9 9h6v6H9z" fill="url(#gp)" stroke="#4c78a8"/></symbol>
<symbol id="i-above" viewBox="0 0 16 16"><path d="M5 6h10v9H5z" fill="url(#gp)" stroke="#4c78a8"/><path d="M1 1h11v10H1z" fill="#4c7cb0" stroke="#204c80"/></symbol>
<symbol id="i-under" viewBox="0 0 16 16"><path d="M1 1h11v10H1z" fill="#4c7cb0" stroke="#204c80"/><path d="M5 6h10v9H5z" fill="url(#gp)" stroke="#4c78a8"/></symbol>
<symbol id="i-win" viewBox="0 0 16 16"><path d="M0 6h3M0 9h3M0 12h3" stroke="#000" stroke-width="1.5" stroke-dasharray="1 1"/><path d="M4 4q3-3 5-1v4q-2-2-5 0z" fill="#e02010"/><path d="M10 3q3 1 5-1v4q-2 2-5 1z" fill="#10a020"/><path d="M4 9q3-2 5 0v4q-2-2-5 0z" fill="#1030d0"/><path d="M10 9q3 1 5-1v4q-2 2-5 1z" fill="#f0d000"/><path d="M4 8q3-2 5 0 3 1 6-1M9.500 2v12M4 14V3M15 2v11" fill="none" stroke="#000"/></symbol>
<symbol id="i-wmp" viewBox="0 0 16 16"><circle cx="8" cy="8" r="7.5" fill="#f09020"/><path d="M8 .5a7.500 7.500 0 0 0-7.500 7.500H8z" fill="#3060d8"/><path d="M.5 8a7.500 7.500 0 0 0 7.500 7.500V8z" fill="#30a040"/><circle cx="8" cy="8" r="4.5" fill="#fff"/><path d="M6.500 5v6l4.500-3z" fill="#202080"/></symbol>
<symbol id="i-desk" viewBox="0 0 16 16"><path d="M1 3h14v10H1z" fill="#088080" stroke="#000"/><path d="M3 5h10v2H3z" fill="#a0e0d0"/><path d="M3 9h10M3 11h10" stroke="#fff" stroke-dasharray="2 1"/></symbol>
<symbol id="i-outlook" viewBox="0 0 16 16"><path d="M3 2l10-1 2 9-10 4z" fill="#90c0f8" stroke="#2050b0"/><path d="M4 4l5 3 4-5" fill="none" stroke="#fff" stroke-width="1.5"/><path d="M1 6q0 7 8 5" fill="none" stroke="#1848b0" stroke-width="1.7"/><path d="M8 8l5 3-5 4z" fill="#1848b0"/></symbol>
<symbol id="i-ie" viewBox="0 0 16 16"><path d="M13 11q-2 4-6 3-4-2-3-6 1-4 5-4 4 1 4 5H5" fill="none" stroke="#2888e0" stroke-width="2.6"/><path d="M1 13Q0 9 8 4t7-1" fill="none" stroke="#58b0f0" stroke-width="1.3"/></symbol>
<symbol id="i-note" viewBox="0 0 16 16"><path d="M1 2h13v13H1z" fill="#40a0b0" stroke="#000"/><path d="M3 4l9 1-1 8H3z" fill="#ffffc8"/><path d="M6 11l8-9 1 1-7 9z" fill="#d09010" stroke="#000" stroke-width=".7"/></symbol>
<symbol id="i-search" viewBox="0 0 16 16"><path d="M1 2h5l1 2h7v9H1z" fill="#ffe878" stroke="#806810"/><circle cx="8" cy="7" r="3.8" fill="#a8e8f8" stroke="#204060" stroke-width="1.3"/><path d="M11 10l4 5" stroke="#1038a0" stroke-width="2.3"/></symbol>
<symbol id="i-folder" viewBox="0 0 16 16"><path d="M1 13V3h5l1 2h6v2" fill="#ffe878" stroke="#605010"/><path d="M1 13l3-6h12l-3 6z" fill="#fff0a0" stroke="#605010"/></symbol>
<symbol id="i-word" viewBox="0 0 16 16"><path d="M5 1h8l2 3v11H5z" fill="#fff" stroke="#000"/><path d="M10 5h4M10 8h4M6 12h8" stroke="#888"/><path d="M1 2h9v8H1z" fill="#1838a8"/><path d="M2 4l1.500 4L5.500 5l2 3L9 4" fill="none" stroke="#fff"/></symbol>
<symbol id="i-net" viewBox="0 0 16 16"><path d="M8 6v4M3 11V9h10v2" fill="none" stroke="#000"/><path d="M5 1h6v5H5zM1 10h5v4H1zM10 10h5v4h-5z" fill="#b0b8c8" stroke="#303848"/><path d="M6 2h4v2H6z" fill="#20d0e0"/><path d="M2 11h3v2H2zM11 11h3v2h-3z" fill="#2040e0"/></symbol>
<symbol id="i-flag4" viewBox="0 0 16 16"><path d="M2 0h12v12H2z" fill="#181818"/><path d="M4 1h3v4H4z" fill="#f08080"/><path d="M9 1h3v4H9z" fill="#60d060"/><path d="M4 7h3v4H4z" fill="#6080ff"/><path d="M9 7h3v4H9z" fill="#f0e060"/></symbol>
<symbol id="i-newdoc" viewBox="0 0 16 16"><path d="M3 0h11v14H3z" fill="#fffff0" stroke="#000"/><path d="M2 3h7v7H2z" fill="#000"/><path d="M3 4h2v2H3z" fill="#e04030"/><path d="M6 4h2v2H6z" fill="#30c040"/><path d="M3 7h2v2H3z" fill="#4060ff"/><path d="M6 7h2v2H6z" fill="#f0e020"/><path d="M10 3h3M10 6h3M5 12h7" stroke="#b8a860"/></symbol>
<symbol id="i-opendoc" viewBox="0 0 16 16"><path d="M1 13V4h5l1 2h6v7z" fill="#ffe060" stroke="#504000"/><path d="M8 8h7v7H8z" fill="#000"/><path d="M9 9h2v2H9z" fill="#e04030"/><path d="M12 9h2v2h-2z" fill="#30c040"/><path d="M9 12h2v2H9z" fill="#4060ff"/><path d="M12 12h2v2h-2z" fill="#f0e020"/><path d="M8 3q3-4 6 0M12 4h3V1" fill="none" stroke="#000"/></symbol>
<symbol id="i-speaker" viewBox="0 0 16 16"><path d="M1 6h3l5-5v14l-5-5H1z" fill="#ffff90" stroke="#404000"/><path d="M11 5l3-3M11 8h4M11 11l3 3" stroke="#707070"/></symbol>
<symbol id="i-gauge" viewBox="0 0 16 16"><path d="M2 15Q0 9 4 5" fill="none" stroke="#10c020" stroke-width="3.5"/><path d="M4 5q2-3 5-3" fill="none" stroke="#f0e020" stroke-width="3.5"/><path d="M9 2h7" stroke="#e02020" stroke-width="3.5"/><path d="M6 7l9 8" stroke="#000" stroke-width="2"/></symbol>
<symbol id="i-nvidia" viewBox="0 0 16 16"><path d="M0 1h16v14H0z" fill="#848400"/><path d="M0 1h8v14H0z" fill="#e8e8d8"/><ellipse cx="8" cy="8" rx="6" ry="4" fill="#f8f8e0" stroke="#606000"/><circle cx="8" cy="8" r="2" fill="none" stroke="#606000" stroke-width="1.5"/></symbol>
<symbol id="i-play" viewBox="0 0 16 16"><path d="M0 0h16v16H0z" fill="#0820f0"/><path d="M.5 15V.5H15" fill="none" stroke="#a0b0ff"/><path d="M5 3v10l7-5z" fill="#fff"/></symbol>
<symbol id="i-tri" viewBox="0 0 16 16"><path d="M1 1h14L8 15z" fill="#1028d0" stroke="#000040"/><path d="M4 4h8M6 7h5M7 10h2" stroke="#b0e0ff" stroke-width="1.3"/></symbol>
<symbol id="i-eject" viewBox="0 0 16 16"><path d="M2 11l6-3 7 3-6 4z" fill="#d8d8d8" stroke="#404040"/><path d="M13 1L5 6" fill="none" stroke="#10a020" stroke-width="2.6"/><path d="M1 3l2 6 6-1z" fill="#10a020"/></symbol>
<symbol id="i-padlock" viewBox="0 0 16 16"><path d="M9 8V4q3-5 5 0v3" fill="none" stroke="#806800" stroke-width="2"/><path d="M1 7h10v8H1z" fill="#f0d020" stroke="#403000"/><path d="M1 9h10M1 11h10M1 13h10" stroke="#a08810"/><path d="M6 9v4" stroke="#fffac0" stroke-width="2"/></symbol>
<symbol id="i-down" viewBox="0 0 16 16"><path d="M4 6h8l-4 4z"/></symbol>
<symbol id="i-up" viewBox="0 0 16 16"><path d="M4 10h8L8 6z"/></symbol>
<symbol id="i-left" viewBox="0 0 16 16"><path d="M10 4v8L6 8z"/></symbol>
<symbol id="i-right" viewBox="0 0 16 16"><path d="M6 4v8l4-4z"/></symbol>
<symbol id="i-first" viewBox="0 0 16 16"><path d="M11 4v8L7 8z"/><path d="M4 4h2v8H4z"/></symbol>
<symbol id="i-last" viewBox="0 0 16 16"><path d="M5 4v8l4-4z"/><path d="M10 4h2v8h-2z"/></symbol>
<symbol id="i-min" viewBox="0 0 16 16"><path d="M3 11h7v2H3z"/></symbol>
<symbol id="i-restore" viewBox="0 0 16 16"><path d="M6 3.500h6.500V9H10M6 3v3M3.500 6.500h6v6h-6z" fill="none" stroke="#000"/><path d="M6 3h7v2H6zM3 6h7v2H3z"/></symbol>
<symbol id="i-close" viewBox="0 0 16 16"><path d="M4 4l8 8M12 4l-8 8" stroke="#000" stroke-width="1.9"/></symbol>
</svg>

<header class="titlebar">
  <svg class="ic"><use href="#i-app"/></svg>
  <h1>Autodesk Map 3D - [E:\model.dwg]</h1>
  <div class="office">
    <span class="office-grip"><svg class="ic"><use href="#i-flag4"/></svg></span>
    <button class="office-btn"><span class="tile word">W</span></button>
    <button class="office-btn"><span class="tile excel">X</span></button>
    <button class="office-btn"><span class="tile power">C</span></button>
    <button class="office-btn"><span class="tile access">P</span></button>
    <button class="office-btn" aria-label="Nový dokument"><svg class="ic"><use href="#i-newdoc"/></svg></button>
    <button class="office-btn" aria-label="Otevřít dokument"><svg class="ic"><use href="#i-opendoc"/></svg></button>
    <button class="office-btn" aria-label="Hledat"><svg class="ic"><use href="#i-search"/></svg></button>
  </div>
  <div class="winbtns">
    <button class="raised" aria-label="Minimalizovat"><svg><use href="#i-min"/></svg></button>
    <button class="raised" aria-label="Obnovit"><svg><use href="#i-restore"/></svg></button>
    <button class="raised gap" aria-label="Zavřít"><svg><use href="#i-close"/></svg></button>
  </div>
</header>

<nav class="menubar">
  <svg class="ic"><use href="#i-doc"/></svg>
  <a href="#">Soubor</a><a href="#">Úpravy</a><a href="#">Zobrazit</a><a href="#">Vložit</a><a href="#">Formát</a><a href="#">Nástroje</a><a href="#">Kresli</a><a href="#">Kóty</a><a href="#">Modifikace</a><a href="#">Map</a><a href="#">Express</a><a href="#">EGP</a><a href="#">Okno</a><a href="#">Nápověda</a>
  <div class="winbtns">
    <button class="raised" aria-label="Minimalizovat výkres"><svg><use href="#i-min"/></svg></button>
    <button class="raised" aria-label="Obnovit výkres"><svg><use href="#i-restore"/></svg></button>
    <button class="raised gap" aria-label="Zavřít výkres"><svg><use href="#i-close"/></svg></button>
  </div>
</nav>

<div class="tbrow">
  <div class="toolbar">
    <i class="grip"></i>
    <button class="tb" aria-label="Nový"><svg><use href="#i-new"/></svg></button>
    <button class="tb" aria-label="Otevřít"><svg><use href="#i-open"/></svg></button>
    <button class="tb" aria-label="Uložit"><svg><use href="#i-save"/></svg></button>
    <i class="sep"></i>
    <button class="tb" aria-label="Tisk"><svg><use href="#i-print"/></svg></button>
    <button class="tb" aria-label="Náhled"><svg><use href="#i-preview"/></svg></button>
    <button class="tb" aria-label="Publikovat"><svg><use href="#i-publish"/></svg></button>
    <i class="sep"></i>
    <button class="tb" aria-label="Vyjmout"><svg><use href="#i-cut"/></svg></button>
    <button class="tb" aria-label="Kopírovat"><svg><use href="#i-copy"/></svg></button>
    <button class="tb" aria-label="Vložit"><svg><use href="#i-paste"/></svg></button>
    <button class="tb" aria-label="Kopírovat vlastnosti"><svg><use href="#i-brush"/></svg></button>
    <button class="tb" aria-label="Editor bloků"><svg><use href="#i-blockedit"/></svg></button>
    <i class="sep"></i>
    <button class="tb" aria-label="Zpět"><svg><use href="#i-undo"/></svg></button>
    <button class="tb drop" aria-label="Seznam zpět"><svg><use href="#i-down"/></svg></button>
    <button class="tb" aria-label="Znovu"><svg><use href="#i-redo"/></svg></button>
    <button class="tb drop off" aria-label="Seznam znovu"><svg><use href="#i-down"/></svg></button>
    <i class="sep"></i>
    <button class="tb" aria-label="Posun"><svg><use href="#i-pan"/></svg></button>
    <button class="tb" aria-label="Zoom"><svg><use href="#i-zoom"/></svg></button>
    <button class="tb" aria-label="Zoom okno"><svg><use href="#i-zoomwin"/></svg></button>
    <button class="tb" aria-label="Zoom předchozí"><svg><use href="#i-zoomprev"/></svg></button>
    <i class="sep"></i>
    <button class="tb" aria-label="Vlastnosti"><svg><use href="#i-props"/></svg></button>
    <button class="tb" aria-label="DesignCenter"><svg><use href="#i-dc"/></svg></button>
    <button class="tb" aria-label="Palety"><svg><use href="#i-palette"/></svg></button>
    <button class="tb" aria-label="Sady výkresů"><svg><use href="#i-sheets"/></svg></button>
    <button class="tb" aria-label="Revize"><svg><use href="#i-markup"/></svg></button>
    <button class="tb" aria-label="Kalkulačka"><svg><use href="#i-calc"/></svg></button>
    <i class="sep"></i>
    <button class="tb" aria-label="Pomoc"><svg><use href="#i-help"/></svg></button>
  </div>
  <div class="toolbar">
    <i class="grip"></i>
    <button class="tb" aria-label="Styl textu"><svg><use href="#i-textstyle"/></svg></button>
    <span class="combo w98"><select aria-label="Styl textu"><option>Standard</option></select><span class="arrow raised"></span></span>
    <i class="sep"></i>
    <button class="tb" aria-label="Styl kót"><svg><use href="#i-dimstyle"/></svg></button>
    <span class="combo w98"><select aria-label="Styl kót"><option>ISO-25</option></select><span class="arrow raised"></span></span>
    <i class="sep"></i>
    <button class="tb" aria-label="Styl tabulky"><svg><use href="#i-tablestyle"/></svg></button>
    <span class="combo w98"><select aria-label="Styl tabulky"><option>Standard</option></select><span class="arrow raised"></span></span>
  </div>
  <div class="toolbar">
    <i class="grip"></i>
    <button class="tb" aria-label="Výřezy"><svg><use href="#i-vports"/></svg></button>
    <button class="tb" aria-label="Jeden výřez"><svg><use href="#i-vp1"/></svg></button>
    <button class="tb" aria-label="Polygonální výřez"><svg><use href="#i-vp2"/></svg></button>
    <button class="tb" aria-label="Objekt na výřez"><svg><use href="#i-vp3"/></svg></button>
    <button class="tb" aria-label="Oříznout výřez"><svg><use href="#i-vp4"/></svg></button>
    <i class="sep"></i>
    <span class="combo w98 off"><select aria-label="Měřítko" disabled><option></option></select><span class="arrow raised"></span></span>
  </div>
</div>

<div class="tbrow">
  <div class="toolbar">
    <i class="grip"></i>
    <button class="tb" aria-label="Správce hladin"><svg><use href="#i-layers"/></svg></button>
    <span class="combo w298"><svg class="ic"><use href="#i-bulb"/></svg><svg class="ic"><use href="#i-sun"/></svg><svg class="ic"><use href="#i-vpfreeze"/></svg><svg class="ic"><use href="#i-lock"/></svg><i class="swatch"></i><select aria-label="Hladina"><option>01_těleso</option></select><span class="arrow raised"></span></span>
    <button class="tb" aria-label="Nastavit hladinu"><svg><use href="#i-layercur"/></svg></button>
    <button class="tb" aria-label="Předchozí hladina"><svg><use href="#i-layerprev"/></svg></button>
  </div>
  <div class="toolbar">
    <i class="grip"></i>
    <span class="combo w148"><i class="swatch lead"></i><select aria-label="Barva"><option>DleHlad</option></select><span class="arrow raised"></span></span>
    <i class="sep"></i>
    <span class="combo w158"><i class="rule long"></i><select aria-label="Typ čáry"><option>DleHlad</option></select><span class="arrow raised"></span></span>
    <i class="sep"></i>
    <span class="combo w124"><i class="rule"></i><select aria-label="Tloušťka čáry"><option>DleHlad</option></select><span class="arrow raised"></span></span>
    <i class="sep"></i>
    <span class="combo w118 off"><select aria-label="Styl vykreslování" disabled><option>DleBarvy</option></select><span class="arrow raised"></span></span>
  </div>
  <div class="toolbar">
    <i class="grip"></i>
    <button class="tb" aria-label="Vzdálenost"><svg><use href="#i-dist"/></svg></button>
    <button class="tb" aria-label="Plocha"><svg><use href="#i-area"/></svg></button>
    <button class="tb" aria-label="Hmotnost"><svg><use href="#i-mass"/></svg></button>
    <i class="sep"></i>
    <button class="tb" aria-label="Výpis"><svg><use href="#i-list"/></svg></button>
    <button class="tb" aria-label="Poloha bodu"><svg><use href="#i-idpoint"/></svg></button>
  </div>
</div>

<div class="tbrow">
  <div class="toolbar">
    <i class="grip"></i>
    <button class="tb" aria-label="Sjednocení"><svg><use href="#i-union"/></svg></button>
    <button class="tb" aria-label="Rozdíl"><svg><use href="#i-subtract"/></svg></button>
    <button class="tb" aria-label="Průnik"><svg><use href="#i-intersect"/></svg></button>
    <i class="sep"></i>
    <button class="tb" aria-label="Vysunout plochy"><svg><use href="#i-extrude"/></svg></button>
    <button class="tb" aria-label="Posunout plochy"><svg><use href="#i-moveface"/></svg></button>
    <button class="tb" aria-label="Odsadit plochy"><svg><use href="#i-offsetface"/></svg></button>
    <button class="tb" aria-label="Odstranit plochy"><svg><use href="#i-delface"/></svg></button>
    <button class="tb" aria-label="Otočit plochy"><svg><use href="#i-rotface"/></svg></button>
    <button class="tb" aria-label="Zkosit plochy"><svg><use href="#i-taper"/></svg></button>
    <button class="tb" aria-label="Kopírovat plochy"><svg><use href="#i-copyface"/></svg></button>
    <button class="tb" aria-label="Barva ploch"><svg><use href="#i-colorface"/></svg></button>
    <i class="sep"></i>
    <button class="tb" aria-label="Kopírovat hrany"><svg><use href="#i-copyedge"/></svg></button>
    <button class="tb" aria-label="Barva hran"><svg><use href="#i-coloredge"/></svg></button>
    <i class="sep"></i>
    <button class="tb" aria-label="Otisk"><svg><use href="#i-imprint"/></svg></button>
    <button class="tb" aria-label="Vyčistit"><svg><use href="#i-clean"/></svg></button>
    <button class="tb" aria-label="Oddělit"><svg><use href="#i-separate"/></svg></button>
    <button class="tb" aria-label="Skořepina"><svg><use href="#i-shell"/></svg></button>
    <button class="tb" aria-label="Kontrola"><svg><use href="#i-check"/></svg></button>
  </div>
  <div class="toolbar">
    <i class="grip"></i>
    <button class="tb" aria-label="3D posun"><svg><use href="#i-pan"/></svg></button>
    <button class="tb" aria-label="3D zoom"><svg><use href="#i-zoom"/></svg></button>
    <button class="tb" aria-label="3D orbit"><svg><use href="#i-orbit"/></svg></button>
    <button class="tb" aria-label="Plynulý orbit"><svg><use href="#i-corbit"/></svg></button>
    <button class="tb" aria-label="Otočení kamery"><svg><use href="#i-swivel"/></svg></button>
    <button class="tb" aria-label="Vzdálenost kamery"><svg><use href="#i-caldist"/></svg></button>
    <button class="tb" aria-label="Ořezové roviny"><svg><use href="#i-clip1"/></svg></button>
    <button class="tb" aria-label="Přední rovina"><svg><use href="#i-clip2"/></svg></button>
    <button class="tb" aria-label="Zadní rovina"><svg><use href="#i-clip3"/></svg></button>
    <i class="sep"></i>
    <span class="combo w138"><select aria-label="Pohled"><option></option></select><span class="arrow raised"></span></span>
  </div>
  <div class="toolbar">
    <i class="grip"></i>
    <button class="tb" aria-label="Kvádr"><svg><use href="#i-box"/></svg></button>
    <button class="tb" aria-label="Koule"><svg><use href="#i-sphere"/></svg></button>
    <button class="tb" aria-label="Válec"><svg><use href="#i-cyl"/></svg></button>
    <button class="tb" aria-label="Kužel"><svg><use href="#i-cone"/></svg></button>
    <button class="tb" aria-label="Klín"><svg><use href="#i-wedge"/></svg></button>
    <button class="tb" aria-label="Anuloid"><svg><use href="#i-torus"/></svg></button>
    <i class="sep"></i>
    <button class="tb" aria-label="Vysunout"><svg><use href="#i-extrude"/></svg></button>
    <button class="tb" aria-label="Rotovat"><svg><use href="#i-revolve"/></svg></button>
    <i class="sep"></i>
    <button class="tb" aria-label="Rozříznout"><svg><use href="#i-slice"/></svg></button>
    <button class="tb" aria-label="Řez"><svg><use href="#i-section"/></svg></button>
    <button class="tb" aria-label="Přesah"><svg><use href="#i-interfere"/></svg></button>
    <i class="sep"></i>
    <button class="tb" aria-label="Kresba"><svg><use href="#i-setdraw"/></svg></button>
    <button class="tb" aria-label="Pohledy"><svg><use href="#i-setview"/></svg></button>
    <button class="tb" aria-label="Profil"><svg><use href="#i-setprof"/></svg></button>
  </div>
</div>

<main class="workspace">
  <div class="dock left">
    <div class="toolbar v">
      <i class="grip"></i>
      <button class="tb" aria-label="Úsečka"><svg><use href="#i-line"/></svg></button>
      <button class="tb" aria-label="Přímka"><svg><use href="#i-xline"/></svg></button>
      <button class="tb" aria-label="Křivka"><svg><use href="#i-pline"/></svg></button>
      <button class="tb" aria-label="Polygon"><svg><use href="#i-polygon"/></svg></button>
      <button class="tb" aria-label="Obdélník"><svg><use href="#i-rect"/></svg></button>
      <button class="tb" aria-label="Oblouk"><svg><use href="#i-arc"/></svg></button>
      <button class="tb" aria-label="Kružnice"><svg><use href="#i-circle"/></svg></button>
      <button class="tb" aria-label="Revizní obláček"><svg><use href="#i-cloud"/></svg></button>
      <button class="tb" aria-label="Spline"><svg><use href="#i-spline"/></svg></button>
      <button class="tb" aria-label="Elipsa"><svg><use href="#i-ellipse"/></svg></button>
      <button class="tb" aria-label="Eliptický oblouk"><svg><use href="#i-elarc"/></svg></button>
      <button class="tb" aria-label="Vložit blok"><svg><use href="#i-insert"/></svg></button>
      <button class="tb" aria-label="Vytvořit blok"><svg><use href="#i-block"/></svg></button>
      <button class="tb" aria-label="Bod"><svg><use href="#i-point"/></svg></button>
      <button class="tb" aria-label="Šrafy"><svg><use href="#i-hatch"/></svg></button>
      <button class="tb" aria-label="Gradient"><svg><use href="#i-gradient"/></svg></button>
      <button class="tb" aria-label="Oblast"><svg><use href="#i-region"/></svg></button>
      <button class="tb" aria-label="Tabulka"><svg><use href="#i-table"/></svg></button>
      <button class="tb" aria-label="Odstavcový text"><svg><use href="#i-mtext"/></svg></button>
    </div>
    <div class="toolbar v">
      <i class="grip"></i>
      <button class="tb" aria-label="Vymazat"><svg><use href="#i-erase"/></svg></button>
      <button class="tb" aria-label="Kopie"><svg><use href="#i-copyobj"/></svg></button>
      <button class="tb" aria-label="Zrcadlit"><svg><use href="#i-mirror"/></svg></button>
      <button class="tb" aria-label="Ekvidistanta"><svg><use href="#i-offset"/></svg></button>
      <button class="tb" aria-label="Pole"><svg><use href="#i-array"/></svg></button>
      <button class="tb" aria-label="Posunout"><svg><use href="#i-move"/></svg></button>
      <button class="tb" aria-label="Otočit"><svg><use href="#i-rotate"/></svg></button>
      <button class="tb" aria-label="Měřítko"><svg><use href="#i-scale"/></svg></button>
      <button class="tb" aria-label="Protáhnout"><svg><use href="#i-stretch"/></svg></button>
      <button class="tb" aria-label="Oříznout"><svg><use href="#i-trim"/></svg></button>
      <button class="tb" aria-label="Prodloužit"><svg><use href="#i-extend"/></svg></button>
      <button class="tb" aria-label="Přerušit v bodě"><svg><use href="#i-breakpt"/></svg></button>
      <button class="tb" aria-label="Přerušit"><svg><use href="#i-break"/></svg></button>
      <button class="tb" aria-label="Spojit"><svg><use href="#i-join"/></svg></button>
      <button class="tb" aria-label="Zkosit"><svg><use href="#i-chamfer"/></svg></button>
      <button class="tb" aria-label="Zaoblit"><svg><use href="#i-fillet"/></svg></button>
      <button class="tb" aria-label="Rozložit"><svg><use href="#i-explode"/></svg></button>
    </div>
  </div>

  <section class="drawing">
    <div class="views">
      <div class="pane">
        <svg class="cad" role="img" aria-label="Půdorys">
          <g transform="translate(-55 -125)" fill="none">
            <g stroke="#ff0">
              <circle cx="303" cy="337" r="90.5"/>
              <path d="M292 281A57.500 57.500 0 1 0 315 281L313 267H294z"/>
              <circle cx="303" cy="337" r="33"/>
              <circle cx="239" cy="300" r="7.5"/>
              <circle cx="367.5" cy="300" r="7.5"/>
              <circle cx="303.5" cy="411.5" r="7.5"/>
            </g>
            <g stroke="#686868">
              <path d="M297.500 331.500h11v11h-11zM303.500 267v76M297 337.500h76"/>
              <path d="M303.500 267l-5 13h10zM303.500 267l-2 13M303.500 267l2 13M373 337.500l-14-6v12zM373 337.500l-14-3M373 337.500l-14 3"/>
            </g>
            <g class="axis" fill="#686868"><text x="301" y="256">Y</text><text x="385" y="342">X</text></g>
          </g>
        </svg>
      </div>
      <div class="pane current">
        <svg class="cad" role="img" aria-label="Prostorový pohled na těleso">
          <defs>
            <clipPath id="c-base"><circle r="1" transform="matrix(645 -65 0 226 712 361)"/><path d="M62 365L1352 235l5 61L67 426z"/></clipPath>
            <clipPath id="c-boss"><circle r="1" transform="matrix(409 -50 0 143 704 296)"/><path d="M283 240L1101 140l12 106L295 346z"/></clipPath>
            <clipPath id="c-bore"><circle r="1" transform="matrix(234 -25 0 83 692 190)"/></clipPath>
            <clipPath id="c-h1"><ellipse cx="1232" cy="245" rx="52" ry="19"/></clipPath>
            <clipPath id="c-h2"><ellipse cx="417" cy="483" rx="51" ry="19"/></clipPath>
          </defs>
          <g transform="translate(-647 -125)">
            <svg x="690" y="180" width="470" height="210" viewBox="0 0 1410 630">
              <g clip-path="url(#c-base)">
                <g transform="matrix(1 0 .08 1 -42 0)">
                  <path fill="#a8a600" d="M0 0h132v700H0z"/><path fill="#cecc00" d="M132 0h97v700h-97z"/><path fill="#dcda00" d="M229 0h127v700H229z"/><path fill="#f0ee04" d="M356 0h151v700H356z"/><path fill="#f6f40a" d="M507 0h162v700H507z"/><path fill="#e0de00" d="M669 0h170v700H669z"/><path fill="#bcba00" d="M839 0h159v700H839z"/><path fill="#9c9a00" d="M998 0h140v700H998z"/><path fill="#6a6800" d="M1138 0h112v700h-112z"/><path fill="#3c3a00" d="M1250 0h74v700h-74z"/><path fill="#7c7a00" d="M1324 0h100v700h-100z"/>
                  <path d="M133 440v90M998 440v90" class="edge"/>
                </g>
              </g>
              <circle class="edge dash" r="1" transform="matrix(645 -65 0 226 712 361)"/>
              <circle class="top" r="1" transform="matrix(645 -65 0 226 707 300)"/>
              <path class="top" d="M1000 62Q1180 72 1260 118T1352 235L1000 300z"/>
              <path fill="#e8e600" d="M900 80L1250 122 1340 236 1000 310z"/>
              <g clip-path="url(#c-h1)"><path fill="#585600" d="M1170 220h22v50h-22z"/><path fill="#a8a600" d="M1192 220h20v50h-20z"/><path fill="#dcda00" d="M1212 220h26v50h-26z"/><path fill="#fffe00" d="M1238 220h24v50h-24z"/><path fill="#d0ce00" d="M1262 220h30v50h-30z"/></g>
              <ellipse class="edge" cx="1232" cy="245" rx="52" ry="19"/>
              <g clip-path="url(#c-h2)"><path fill="#3c3a00" d="M360 460h14v50h-14z"/><path fill="#8c8a00" d="M374 460h20v50h-20z"/><path fill="#c8c600" d="M394 460h26v50h-26z"/><path fill="#fffe00" d="M420 460h26v50h-26z"/><path fill="#d0ce00" d="M446 460h30v50h-30z"/></g>
              <ellipse class="edge" cx="417" cy="483" rx="51" ry="19"/>
              <g clip-path="url(#c-boss)">
                <g transform="matrix(1 0 .12 1 -44 0)">
                  <path fill="#b4b200" d="M200 0h130v700H200z"/><path fill="#d4d200" d="M330 0h97v700h-97z"/><path fill="#ecea00" d="M427 0h113v700H427z"/><path fill="#f8f60a" d="M540 0h130v700H540z"/><path fill="#e0de00" d="M670 0h280v700H670z"/><path fill="#706e00" d="M950 0h105v700H950z"/><path fill="#383600" d="M1055 0h150v700h-150z"/>
                  <path d="M330 240v140M340 240v150" class="edge"/>
                </g>
              </g>
              <path class="edge" d="M295 346C310 410 420 449 580 449 660 449 740 440 815 422M985 363C1070 335 1113 290 1113 246L1101 140M288 260l8 90"/>
              <circle class="top" r="1" transform="matrix(409 -50 0 143 692 190)"/>
              <path fill="#e8e600" d="M720 330l80-10 55 22 123-37-30-30-60-60-150 60z"/>
              <path fill="#cecc00" class="face" d="M800 320l55 22 13 101-53-21z"/>
              <path fill="#aeac00" class="face" d="M855 342l123-37 10 103-120 35z"/>
              <path class="edge" d="M948 275l30 30"/>
              <g clip-path="url(#c-bore)">
                <g transform="matrix(1 0 .12 1 -22 0)">
                  <path fill="#2e2c00" d="M440 50h61v300h-61z"/><path fill="#7c7a00" d="M501 50h71v300h-71z"/><path fill="#bab800" d="M572 50h95v300h-95z"/><path fill="#f2f000" d="M667 50h95v300h-95z"/><path fill="#eae800" d="M762 50h87v300h-87z"/><path fill="#d8d600" d="M849 50h58v300h-58z"/><path fill="#a8a600" d="M907 50h60v300h-60z"/>
                </g>
              </g>
              <circle class="edge" r="1" transform="matrix(234 -25 0 83 692 190)"/>
              <path d="M712 355l-8-80" stroke="#00c000" stroke-width="10"/><path d="M697 228l-14 46 35 0z" fill="#00b818"/><path d="M697 228l-8 46 14 2z" fill="#70f878"/>
              <path d="M712 357l-76 20" stroke="#1878d8" stroke-width="9"/><path d="M588 391l40-28 13 30z" fill="#0c5cb0"/><path d="M588 391l40-28 8 16z" fill="#58b8ff"/>
              <path d="M712 357l32 20" stroke="#e00000" stroke-width="9"/><path d="M774 394l-38-3 17-27z" fill="#f00808"/>
            </svg>
            <g class="axis"><text x="929" y="252" fill="#00e000">Y</text><text x="901" y="300" fill="#1890e8">Z</text><text x="951" y="300" fill="#b03000">X</text></g>
            <path d="M892.500 514l8 62M869 529.500l54 31" stroke="#fff"/><path d="M893.500 542.500h6v6h-6z" fill="#000" stroke="#fff"/>
          </g>
        </svg>
      </div>
      <div class="scroll vert">
        <button class="raised" aria-label="Nahoru"><svg><use href="#i-up"/></svg></button>
        <i class="fill"></i><i class="thumb raised"></i>
        <button class="raised" aria-label="Dolů"><svg><use href="#i-down"/></svg></button>
      </div>
    </div>
    <div class="tabs">
      <div class="tablist">
        <button class="raised nav" aria-label="První"><svg><use href="#i-first"/></svg></button>
        <button class="raised nav" aria-label="Předchozí"><svg><use href="#i-left"/></svg></button>
        <button class="raised nav" aria-label="Další"><svg><use href="#i-right"/></svg></button>
        <button class="raised nav" aria-label="Poslední"><svg><use href="#i-last"/></svg></button>
        <a class="tab on" href="#"><svg class="slant"><path d="M0 0l6 16h2V0z" fill="#000"/></svg><span>Model</span></a>
        <a class="tab" href="#"><svg class="slant"><path d="M0 0h6L0 16z" fill="#000"/><path d="M7 0L1 16M4 8l3 8" stroke="#000"/></svg><span>Rozvržení1</span></a>
        <a class="tab" href="#"><svg class="slant"><path d="M7 0L1 16M4 8l3 8" stroke="#000"/></svg><span>Rozvržení2</span><svg class="slant"><path d="M7 0L1 16" stroke="#000"/></svg></a>
      </div>
      <div class="scroll horiz">
        <i class="splitter raised"></i>
        <button class="raised" aria-label="Vlevo"><svg><use href="#i-left"/></svg></button>
        <i class="fill"></i><i class="thumb raised"></i>
        <button class="raised" aria-label="Vpravo"><svg><use href="#i-right"/></svg></button>
      </div>
    </div>
    <div class="tray-menu"><button class="plain" aria-label="Nabídka"><svg><use href="#i-down"/></svg></button></div>
  </section>

  <div class="dock right">
    <div class="toolbar v">
      <i class="grip"></i>
      <button class="tb" aria-label="Dočasný bod"><svg><use href="#i-tt"/></svg></button>
      <button class="tb" aria-label="Od bodu"><svg><use href="#i-from"/></svg></button>
      <i class="sep"></i>
      <button class="tb" aria-label="Koncový bod"><svg><use href="#i-endp"/></svg></button>
      <button class="tb" aria-label="Polovina"><svg><use href="#i-midp"/></svg></button>
      <button class="tb" aria-label="Průsečík"><svg><use href="#i-int"/></svg></button>
      <button class="tb" aria-label="Zdánlivý průsečík"><svg><use href="#i-appint"/></svg></button>
      <button class="tb" aria-label="Protažení"><svg><use href="#i-ext"/></svg></button>
      <i class="sep"></i>
      <button class="tb" aria-label="Střed"><svg><use href="#i-cen"/></svg></button>
      <button class="tb" aria-label="Kvadrant"><svg><use href="#i-qua"/></svg></button>
      <button class="tb" aria-label="Tečna"><svg><use href="#i-tan"/></svg></button>
      <i class="sep"></i>
      <button class="tb" aria-label="Kolmo"><svg><use href="#i-per"/></svg></button>
      <button class="tb" aria-label="Rovnoběžně"><svg><use href="#i-par"/></svg></button>
      <button class="tb" aria-label="Vložení"><svg><use href="#i-ins"/></svg></button>
      <button class="tb" aria-label="Uzel"><svg><use href="#i-nod"/></svg></button>
      <i class="sep"></i>
      <button class="tb" aria-label="Nejblíže"><svg><use href="#i-nea"/></svg></button>
      <button class="tb" aria-label="Žádný"><svg><use href="#i-non"/></svg></button>
      <i class="sep"></i>
      <button class="tb" aria-label="Nastavení uchopení"><svg><use href="#i-magnet"/></svg></button>
    </div>
    <div class="toolbar v">
      <i class="grip"></i>
      <button class="tb" aria-label="Do popředí"><svg><use href="#i-front"/></svg></button>
      <button class="tb" aria-label="Do pozadí"><svg><use href="#i-back"/></svg></button>
      <button class="tb" aria-label="Nad objekty"><svg><use href="#i-above"/></svg></button>
      <button class="tb" aria-label="Pod objekty"><svg><use href="#i-under"/></svg></button>
    </div>
  </div>
</main>

<section class="command">
  <i class="grip"></i>
  <div class="cmdbox">
    <div class="history">
      <div class="log">Příkaz: '_3dorbit Ukončete příkaz klávesou ESC nebo ENTER, nebo použijte pravé<br>tlačítko pro vyvolání místní nabídky.<br>Regeneruji model.</div>
      <div class="scroll vert">
        <button class="raised" aria-label="Historie nahoru"><svg><use href="#i-up"/></svg></button>
        <i class="thumb raised"></i>
        <button class="raised" aria-label="Historie dolů"><svg><use href="#i-down"/></svg></button>
      </div>
    </div>
    <div class="promptrow">
      <label for="cmd">Příkaz:</label><input id="cmd" type="text">
      <div class="scroll horiz">
        <button class="raised" aria-label="Příkaz vlevo"><svg><use href="#i-left"/></svg></button>
        <i class="thumb raised"></i><i class="fill"></i>
        <button class="raised" aria-label="Příkaz vpravo"><svg><use href="#i-right"/></svg></button>
      </div>
    </div>
  </div>
</section>

<div class="status">
  <span class="field coords">-157.2175, -313.5338, 0.0000</span>
  <button class="mode">KROK</button><button class="mode">RASTR</button><button class="mode">ORTO</button><button class="mode on">POLÁR</button><button class="mode on">UCHOP</button><button class="mode on">OTRAS</button><button class="mode">DYN</button><button class="mode">TLČ</button><button class="mode on">MODEL</button>
  <span class="field ratio">1 : 2.8779</span>
  <span class="field lock"><svg class="ic"><use href="#i-padlock"/></svg></span>
  <button class="plain" aria-label="Nabídka stavového řádku"><svg><use href="#i-down"/></svg></button>
</div>

<footer class="taskbar">
  <button class="start raised"><svg class="ic"><use href="#i-win"/></svg>Start</button>
  <i class="bar"></i>
  <div class="quick">
    <button class="plain" aria-label="Přehrávač"><svg class="ic"><use href="#i-wmp"/></svg></button>
    <button class="plain" aria-label="Terminál"><svg class="ic"><use href="#i-desk"/></svg></button>
    <button class="plain" aria-label="Outlook Express"><svg class="ic"><use href="#i-outlook"/></svg></button>
    <button class="plain" aria-label="Internet Explorer"><svg class="ic"><use href="#i-ie"/></svg></button>
    <button class="plain" aria-label="Plocha"><svg class="ic"><use href="#i-note"/></svg></button>
  </div>
  <i class="bar"></i>
  <div class="tasks">
    <button class="task raised"><svg class="ic"><use href="#i-outlook"/></svg>Doručená p...</button>
    <button class="task raised"><svg class="ic"><use href="#i-search"/></svg>Vyměnitelný...</button>
    <button class="task on"><svg class="ic"><use href="#i-app"/></svg>Autodesk ...</button>
    <button class="task raised"><svg class="ic"><use href="#i-word"/></svg>Postup mod...</button>
    <button class="task raised"><svg class="ic"><use href="#i-net"/></svg>Egp</button>
    <button class="task raised"><svg class="ic"><use href="#i-folder"/></svg>REWRITE</button>
    <button class="task raised"><svg class="ic"><use href="#i-search"/></svg>REWRITE</button>
  </div>
  <div class="systray">
    <svg class="ic"><use href="#i-speaker"/></svg><svg class="ic"><use href="#i-gauge"/></svg><svg class="ic"><use href="#i-nvidia"/></svg><svg class="ic"><use href="#i-play"/></svg><svg class="ic"><use href="#i-tri"/></svg><span class="lang">CS</span><svg class="ic"><use href="#i-eject"/></svg>
    <time>12:48</time>
  </div>
</footer>
</body>
</html>
```

FILE: styles.css
```css
:root {
  --face: #d4d0c8;
  --light: #fff;
  --shade: #808080;
  --dark: #404040;
  --check: conic-gradient(#fff 25%, #d4d0c8 0 50%, #fff 0 75%, #d4d0c8 0) 0 0 / 2px 2px;
}

* { box-sizing: border-box; }

body {
  margin: 0;
  min-height: 100vh;
  display: flex;
  flex-direction: column;
  background: var(--face);
  color: #000;
  font: 11px/13px "Liberation Sans", Arial, sans-serif;
}

.sprite { position: absolute; width: 0; height: 0; }

button, select, input {
  margin: 0;
  padding: 0;
  border: 0;
  border-radius: 0;
  background: none;
  color: inherit;
  font: inherit;
}

a { color: inherit; text-decoration: none; }

svg { display: block; flex: none; }
.ic, .tb svg { width: 16px; height: 16px; }

.raised {
  background: var(--face);
  border: 1px solid;
  border-color: var(--light) var(--dark) var(--dark) var(--light);
  box-shadow: inset -1px -1px var(--shade);
}

.plain svg { width: 16px; height: 16px; }

/* title bar */
.titlebar {
  display: flex;
  align-items: center;
  height: 18px;
  padding: 0 2px;
  background: linear-gradient(90deg, #0a246a, #a6caf0);
}
.titlebar h1 {
  flex: 1;
  margin: 0 0 0 2px;
  color: #fff;
  font: bold 11px/16px "DejaVu Sans Condensed", "DejaVu Sans", sans-serif;
  white-space: nowrap;
}
.office { display: flex; height: 18px; margin-right: 10px; }
.office-grip {
  width: 18px;
  overflow: hidden;
  background: #686868;
  border-right: 2px solid #0000e0;
}
.office-grip .ic { width: 14px; height: 14px; }
.office-btn {
  width: 23px;
  display: flex;
  align-items: center;
  justify-content: center;
  background: var(--face);
  border-right: 1px solid var(--shade);
  border-bottom: 1px solid var(--shade);
}
.tile {
  width: 16px;
  height: 16px;
  border: 2px solid;
  font: bold 11px/12px "Liberation Serif", serif;
  text-align: center;
  background: #fff;
}
.word { color: #101080; border-color: #101080; }
.excel { color: #208040; border-color: #208040; }
.power { color: #e04010; border-color: #e04010; }
.access { color: #901048; border-color: #901048; }

.winbtns { display: flex; }
.winbtns button { width: 16px; height: 14px; }
.winbtns svg { width: 14px; height: 12px; }
.winbtns .gap { margin-left: 2px; }

/* menu */
.menubar {
  display: flex;
  align-items: center;
  height: 20px;
  padding: 0 2px 0 4px;
  gap: 11px;
}
.menubar > .ic { margin-right: -5px; }
.menubar .winbtns { margin-left: auto; }

/* toolbars */
.tbrow { display: flex; gap: 1px; height: 28px; }
.toolbar {
  display: flex;
  align-items: center;
  padding-right: 4px;
  border-top: 1px solid var(--light);
  border-right: 1px solid var(--shade);
  border-bottom: 1px solid var(--shade);
}
.grip { flex: none; width: 12px; height: 23px; display: flex; gap: 1px; padding-left: 3px; }
.grip::before, .grip::after {
  content: "";
  width: 3px;
  border: 1px solid;
  border-color: var(--light) var(--shade) var(--shade) var(--light);
}
.tb {
  width: 23px;
  height: 22px;
  display: flex;
  align-items: center;
  justify-content: center;
}
.tb.drop { width: 13px; overflow: hidden; }
.tb.drop svg { width: 10px; height: 10px; fill: #000080; }
.tb.drop.off svg { fill: #a0a0a0; }
.sep { flex: none; width: 6px; height: 20px; display: flex; justify-content: center; }
.sep::before { content: ""; border-left: 1px solid var(--shade); border-right: 1px solid var(--light); }

.combo {
  display: flex;
  align-items: center;
  height: 22px;
  margin: 0 1px;
  background: #fff;
  border: 1px solid;
  border-color: var(--shade) var(--light) var(--light) var(--shade);
  box-shadow: inset 1px 1px var(--dark);
  padding: 2px 1px 1px 2px;
}
.combo .ic { width: 17px; height: 16px; }
.combo select { flex: 1; min-width: 0; padding-left: 3px; appearance: none; }
.combo .swatch + select { padding-left: 6px; }
.combo .swatch.lead + select { padding-left: 5px; }
.arrow { width: 16px; align-self: stretch; display: flex; align-items: center; justify-content: center; }
.arrow::before { content: ""; border: 4px solid transparent; border-top-color: #000; border-bottom: 0; }
.combo.off { background: var(--face); color: var(--shade); }
.combo.off select { opacity: 1; color: var(--shade); padding-left: 8px; }
.combo.off .arrow::before { border-top-color: var(--shade); }
.swatch { width: 10px; height: 10px; background: #ff0; border: 1px solid #000; }
.swatch.lead { margin-left: 3px; }
.rule { width: 36px; height: 1px; margin-left: 2px; background: #000; }
.rule.long { width: 60px; }
.rule + select { padding-left: 4px; }
.w98 { width: 98px; }
.w118 { width: 118px; }
.w124 { width: 124px; }
.w138 { width: 138px; }
.w148 { width: 148px; }
.w158 { width: 158px; }
.w298 { width: 298px; }

/* docks */
.workspace { flex: 1; display: flex; }
.dock { display: flex; align-items: flex-start; flex: none; }
.dock.left { width: 52px; gap: 1px; }
.dock.right { width: 26px; flex-direction: column; align-items: stretch; gap: 3px; padding-left: 1px; }
.toolbar.v {
  flex-direction: column;
  width: 25px;
  padding: 0 0 4px;
  border-left: 1px solid var(--light);
}
.toolbar.v .grip { flex-direction: column; width: 21px; height: 10px; padding: 1px 0 0; }
.toolbar.v .grip::before, .toolbar.v .grip::after { width: auto; height: 3px; }
.toolbar.v .sep { width: 20px; height: 6px; flex-direction: column; }
.toolbar.v .sep::before { border: 0; border-top: 1px solid var(--shade); border-bottom: 1px solid var(--light); }

/* drawing window */
.drawing {
  flex: 1;
  min-width: 0;
  display: flex;
  flex-direction: column;
  margin-bottom: 3px;
  border: 1px solid;
  border-color: var(--shade) var(--light) var(--light) var(--shade);
}
.views {
  flex: 1;
  display: flex;
  border-top: 1px solid #000;
  border-left: 1px solid #000;
}
.pane { flex: 1; min-width: 0; display: flex; background: #000; border: 1px solid #fff; }
.pane.current { border-left-width: 2px; }
.cad { flex: 1; width: 100%; height: auto; overflow: hidden; shape-rendering: crispEdges; }
.axis { font: 12px "Liberation Sans", Arial, sans-serif; }
.edge, .top, .face { stroke: #ff0; vector-effect: non-scaling-stroke; stroke-width: 1px; }
.edge { fill: none; }
.dash { stroke-dasharray: 7 1; }
.top { fill: #e8e600; }

.scroll { display: flex; background: var(--face); }
.scroll.vert { flex-direction: column; width: 17px; }
.scroll button, .scroll .thumb, .nav {
  flex: none;
  width: 16px;
  height: 15px;
  display: flex;
  align-items: center;
  justify-content: center;
}
.scroll svg, .nav svg { width: 14px; height: 14px; }
.scroll .fill { flex: 1; background: var(--check); }

.tabs { display: flex; height: 17px; border-bottom: 1px solid var(--shade); }
.tablist { flex: 39; display: flex; border-top: 1px solid #000; }
.nav { width: 18px; margin-right: 1px; }
.tab { display: flex; line-height: 15px; }
.tab.on span { background: #000; color: #fff; }
.tab span { padding: 0 1px; border-bottom: 1px solid #000; }
.slant { width: 8px; height: 16px; }
.scroll.horiz .splitter { width: 6px; }
.tabs .scroll { flex: 20; margin-right: 17px; }
.tray-menu { display: flex; justify-content: flex-end; align-items: center; height: 25px; padding: 10px 0 0; border-top: 1px solid var(--light); }

/* command line */
.command {
  display: flex;
  height: 76px;
  padding: 5px 8px 1px 6px;
  border-top: 2px solid #000;
  border-bottom: 2px solid var(--shade);
}
.command .grip { width: 11px; height: 62px; padding: 2px 0 0; }
.cmdbox { flex: 1; display: flex; flex-direction: column; font: 13px/13px "Liberation Mono", "Courier New", monospace; }
.history {
  display: flex;
  height: 50px;
  background: #fff;
  border: 1px solid #000;
  border-right-color: var(--shade);
  border-bottom-color: var(--shade);
}
.log { flex: 1; padding-top: 1px; }
.history .scroll button, .history .thumb { height: 16px; }
.promptrow { display: flex; align-items: center; height: 17px; margin-right: 17px; background: #fff; border-left: 1px solid #000; }
.promptrow input { flex: 1; min-width: 0; outline: 0; }
.promptrow .scroll { width: 62px; padding-left: 1px; }
.promptrow .scroll button, .promptrow .thumb { width: 15px; }

/* status bar */
.status { display: flex; align-items: center; gap: 3px; height: 24px; padding: 0 0 0 5px; }
.field {
  height: 19px;
  padding: 3px 0 0 1px;
  border: 1px solid;
  border-color: var(--shade) var(--light) var(--light) var(--shade);
}
.coords { width: 238px; margin-right: 1px; }
.ratio { width: 105px; margin-left: 15px; padding-left: 6px; }
.lock { width: 24px; height: 19px; margin-left: auto; padding: 0 3px; }
.mode {
  height: 19px;
  padding: 0 1px;
  border: 1px solid;
  border-color: var(--light) var(--shade) var(--shade) var(--light);
}
.mode.on { border-color: #000 var(--light) var(--light) #000; padding: 2px 0 0 2px; }

/* taskbar */
.taskbar {
  display: flex;
  align-items: center;
  gap: 3px;
  height: 27px;
  padding: 1px 2px 0;
  border-top: 1px solid var(--light);
}
.start { display: flex; align-items: center; gap: 2px; width: 56px; height: 22px; padding-left: 3px; font: bold 11px/13px "DejaVu Sans Condensed", "DejaVu Sans", sans-serif; }
.bar { width: 8px; height: 20px; border-left: 1px solid var(--shade); box-shadow: inset 1px 0 var(--light); display: flex; }
.bar::after { content: ""; width: 3px; margin-left: 3px; border: 1px solid; border-color: var(--light) var(--shade) var(--shade) var(--light); }
.quick { display: flex; gap: 7px; width: 123px; padding-left: 1px; }
.tasks { flex: 1; display: flex; gap: 3px; }
.task { display: flex; align-items: center; gap: 2px; width: 94px; height: 22px; padding-left: 3px; white-space: nowrap; }
.task.on {
  background: var(--check);
  border: 1px solid;
  border-color: var(--dark) var(--light) var(--light) var(--dark);
  box-shadow: inset 1px 1px var(--shade);
  font: bold 11px/13px "DejaVu Sans Condensed", "DejaVu Sans", sans-serif;
}
.systray {
  display: flex;
  align-items: center;
  gap: 2px;
  height: 22px;
  padding: 0 11px 0 3px;
  border: 1px solid;
  border-color: var(--shade) var(--light) var(--light) var(--shade);
}
.systray time { margin-left: 14px; }
.lang { width: 16px; height: 16px; background: #000080; color: #fff; font-size: 10px; line-height: 16px; text-align: center; }
```
